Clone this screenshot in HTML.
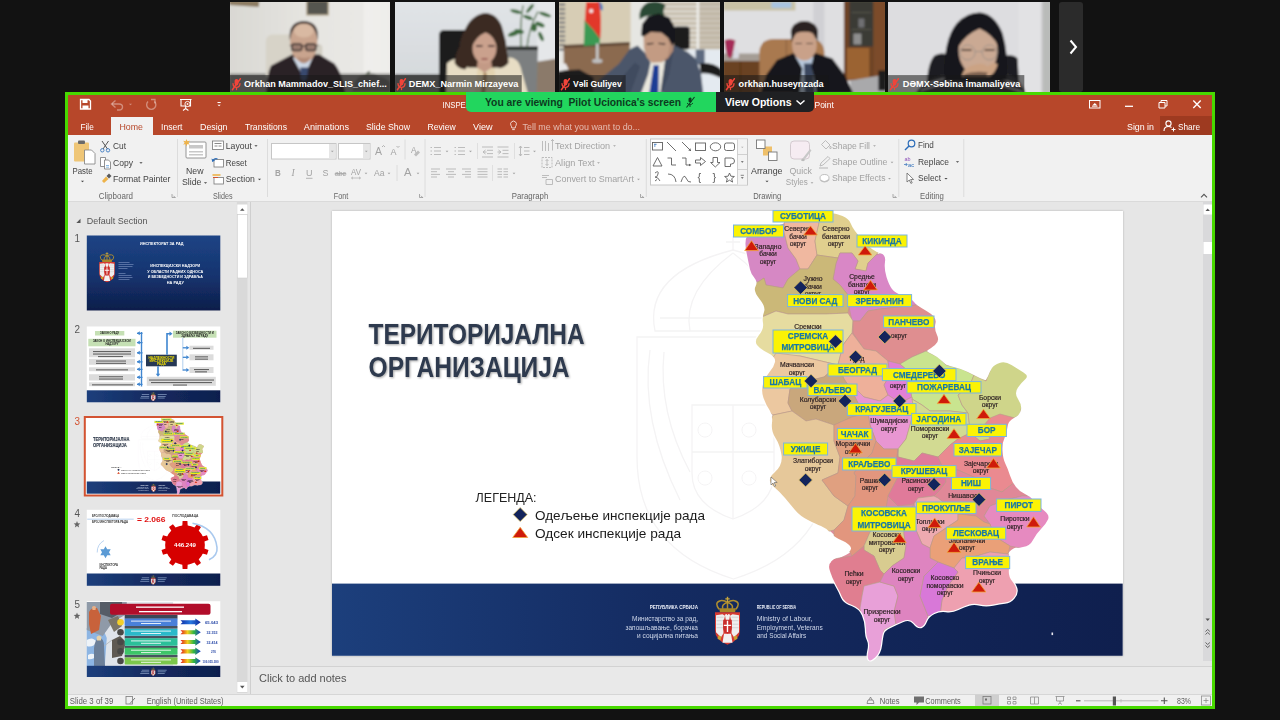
<!DOCTYPE html>
<html lang="en"><head><meta charset="utf-8"><title>Zoom Meeting - screen share</title>
<style>
html,body{margin:0;padding:0;background:#121212;}
body{width:1280px;height:720px;overflow:hidden;position:relative;font-family:"Liberation Sans",sans-serif;}
.abs{position:absolute;}
.tile{position:absolute;top:1.5px;height:90px;overflow:hidden;background:#ddd;}
.tile svg{position:absolute;left:0;top:0;}
.namebar{position:absolute;left:0;bottom:0;height:17px;background:rgba(30,30,30,.62);}
.nav{position:absolute;left:1058.5px;top:1.5px;width:24.5px;height:90px;background:#2b2b2b;border-radius:3px;}
#share{position:absolute;left:65px;top:92px;width:1144px;height:611px;border:3px solid #47d800;background:#e6e6e6;overflow:hidden;}
#share>div{position:absolute;}
#titlebar{left:0;top:0;width:1144px;height:40px;background:#b7472a;}
#ribbon{left:0;top:40px;width:1144px;height:66px;background:#f1f1f1;border-bottom:1px solid #dadada;}
#hometab{left:43px;top:22px;width:41.5px;height:18px;background:#f1f1f1;}
#sharebtn{left:1092px;top:21px;width:52px;height:19px;background:#9e3a20;}
#thumbs{left:0;top:107px;width:182px;height:492px;background:#e6e6e6;border-right:1px solid #cfcfcf;}
#slide{left:264px;top:115.5px;width:790.7px;height:445.3px;background:#fff;box-shadow:0 0 2px rgba(0,0,0,.25);}
#notes{left:183px;top:571px;width:961px;height:28px;background:#e9e9e9;border-top:1px solid #d2d2d2;}
#status{left:0;top:599px;width:1144px;height:12px;background:#f0f0f0;border-top:1px solid #d6d6d6;}
#ov{position:absolute;left:68px;top:95px;filter:blur(.4px);}
#banner{position:absolute;left:466px;top:92px;width:250px;height:20px;background:#22d65e;border-radius:0 0 0 5px;}
#viewopt{position:absolute;left:716px;top:92px;width:98px;height:20px;background:#1f2023;border-radius:0 0 5px 0;}
text{font-family:"Liberation Sans",sans-serif;}
</style></head><body>

<div class="tile" style="left:229.7px;width:160.4px"><svg width="160.4" height="90" viewBox="229.7 1.5 160.4 90"><defs><filter id="vb0" x="-5%" y="-5%" width="110%" height="110%"><feGaussianBlur stdDeviation="0.9"/></filter></defs><g filter="url(#vb0)"><linearGradient id="w1" x1="0" x2="1"><stop offset="0" stop-color="#d9d8d3"/><stop offset=".5" stop-color="#e6e5e1"/><stop offset=".82" stop-color="#e9e8e5"/><stop offset=".84" stop-color="#f0efec"/><stop offset="1" stop-color="#eeedea"/></linearGradient><rect x="229.0" y="0.0" width="162.0" height="93.0" fill="url(#w1)" /><rect x="229.0" y="73.0" width="162.0" height="20.0" fill="#8c8b88" /><rect x="306.5" y="0.0" width="21.5" height="14.5" fill="#54544f" stroke="#b9a98a" stroke-width="1.2" /><path d="M229 0h30l-.5 6.500l-29.500-2z" fill="#8d7c62"/><path d="M352 91q3-16 12-17q10-3 14 2q8 1 12 6v9z" fill="#6c6c68"/><path d="M364 76q3-6 6-5q-1 4-6 5" fill="#566050"/><rect x="265.500" y="34" width="30" height="46" rx="7" fill="#d7d3c8"/><rect x="312" y="44" width="10" height="14" rx="3" fill="#d2cec3"/><path d="M266 93q1-22 5-28l21-11h27l15 9q5 6 8 16l3 14z" fill="#2b2126"/><path d="M292.500 57l11 20l9-20z" fill="#cdd8e6"/><path d="M300 67h8l-1.500 11l-3 3l-3-3z" fill="#38486e"/><ellipse cx="303.500" cy="42" rx="13.600" ry="20" fill="#c9a48e"/><path d="M289.500 40q-2-19 14-19.500q16 .5 14 19.500q-1.500-9-4.500-12q-9-4-19 0q-3 3-4.500 12z" fill="#3a2c28"/><ellipse cx="303.500" cy="30" rx="10" ry="7" fill="#d9b9a2"/><g fill="rgba(70,55,55,.35)" stroke="#2b2527" stroke-width="1.400"><rect x="291.500" y="43.500" width="10" height="6.500" rx="2"/><rect x="305.500" y="43.500" width="10" height="6.500" rx="2"/></g><path d="M301.500 45.500h4M289.500 45h2M315.500 45h2.500" stroke="#2b2527" stroke-width="1.200"/><path d="M297 56q6.500 3 13 0q-2 7-6.500 7t-6.500-7z" fill="#a8806e" opacity=".7"/></g><rect x="229.7" y="74.6" width="160.4" height="17.0" fill="rgba(24,24,24,.55)" /><g transform="translate(230.9 77.6)" stroke="#f0453a" fill="none" stroke-width="1.300" stroke-linecap="round"><rect x="3.400" y="0.800" width="3.800" height="6.500" rx="1.900" fill="#f0453a" stroke="none"/><path d="M1.800 5.500q.3 3.800 3.500 3.800q3.200 0 3.500-3.800M5.300 9.300v2.200"/><path d="M9.200 0.600l-8 11" stroke-width="1.500"/></g><text x="243.8" y="86.4" font-size="9.8" fill="#fff" textLength="142.6" lengthAdjust="spacingAndGlyphs" font-weight="bold" >Orkhan Mammadov_SLIS_chief...</text></svg></div>
<div class="tile" style="left:395.0px;width:160.4px"><svg width="160.4" height="90" viewBox="395.0 1.5 160.4 90"><defs><filter id="vb1" x="-5%" y="-5%" width="110%" height="110%"><feGaussianBlur stdDeviation="0.9"/></filter></defs><g filter="url(#vb1)"><linearGradient id="w2" x1="0" x2="0" y1="0" y2="1"><stop offset="0" stop-color="#e1e4e7"/><stop offset="1" stop-color="#d3d7da"/></linearGradient><rect x="394.0" y="0.0" width="163.0" height="93.0" fill="url(#w2)" /><rect x="394.0" y="73.5" width="60.0" height="20.0" fill="#7a7c7d" /><rect x="537.0" y="0.0" width="20.0" height="60.0" fill="#e5e7e9" /><path d="M533 62l24-4v35h-24z" fill="#8b7a6a"/><path d="M507 46h31l-1.500 47h-27z" fill="#7c7f80"/><path d="M507 46h31v3.500h-31z" fill="#2c2c2a"/><g stroke="#4d6a46" stroke-width="1.300" fill="none"><path d="M521 47q-1-25 2-42"/><path d="M527 47q2-20 11-36"/></g><g fill="#3d6a3c"><ellipse cx="516" cy="11" rx="6" ry="1.800" transform="rotate(15 516 11)"/><ellipse cx="545" cy="14" rx="6.500" ry="1.800" transform="rotate(18 545 14)"/><ellipse cx="530" cy="8" rx="5.500" ry="1.700" transform="rotate(-50 530 8)"/><ellipse cx="540" cy="24" rx="5" ry="2.200" transform="rotate(25 540 24)"/><ellipse cx="514" cy="33" rx="6.500" ry="2.300" transform="rotate(-20 514 33)"/><ellipse cx="534" cy="27" rx="3" ry="4" /><ellipse cx="519" cy="31" rx="5" ry="2.200" transform="rotate(10 519 31)"/><ellipse cx="528" cy="17" rx="5" ry="1.800" transform="rotate(20 528 17)"/><ellipse cx="541" cy="36" rx="2" ry="5" transform="rotate(-25 541 36)"/></g><rect x="439" y="29.500" width="30" height="70" rx="5" fill="#1b1b1d"/><path d="M446 93l1-30q6-6 12-4l14 4l11 8l14-10q10-6 16-3q6 3 8 14l6 21z" fill="#e7ddc4"/><path d="M478 64l7 9l9-9l3 29h-22z" fill="#e3d3b0"/><path d="M484 70l3 4l-2 19h-4z" fill="#a88660"/><path d="M465 69q-8-1-10.500-7q1-9 5-16q1-10 5.500-17q4-9 10.500-13q5-3.500 10.500-3.500q6 .5 10.500 4.700q5 5 6.600 13.200q3 9 4 20q1.500 7 1.400 12q-4 5-9.300 5.300l-6-12h-16z" fill="#3a2a22"/><rect x="468" y="48" width="34" height="19" fill="#3a2a22"/><path d="M478 58h13l1 9l-7.500 5l-7.500-5z" fill="#c39a86"/><ellipse cx="484.500" cy="47.500" rx="12" ry="15.500" fill="#caa18d"/><path d="M471.500 47q0-14 9-16.500l5-1l-1 3q-8 3-13 14.500zM497.500 47q0-13-7-16l-5-1.500l1.500 3q6 2 10.500 14.500z" fill="#3a2a22"/><path d="M476 45.500h6.500M488 45.500h6.500" stroke="#35221f" stroke-width="1.500"/><path d="M481.500 58.500h6" stroke="#8e4a48" stroke-width="1.500"/></g><rect x="395.0" y="74.6" width="126.7" height="17.0" fill="rgba(24,24,24,.55)" /><g transform="translate(396.2 77.6)" stroke="#f0453a" fill="none" stroke-width="1.300" stroke-linecap="round"><rect x="3.400" y="0.800" width="3.800" height="6.500" rx="1.900" fill="#f0453a" stroke="none"/><path d="M1.800 5.500q.3 3.800 3.500 3.800q3.200 0 3.500-3.800M5.300 9.300v2.200"/><path d="M9.200 0.600l-8 11" stroke-width="1.500"/></g><text x="408.8" y="86.4" font-size="9.8" fill="#fff" textLength="109.6" lengthAdjust="spacingAndGlyphs" font-weight="bold" >DEMX_Narmin Mirzayeva</text></svg></div>
<div class="tile" style="left:559.3px;width:160.7px"><svg width="160.7" height="90" viewBox="559.3 1.5 160.7 90"><defs><filter id="vb2" x="-5%" y="-5%" width="110%" height="110%"><feGaussianBlur stdDeviation="0.9"/></filter></defs><g filter="url(#vb2)"><rect x="558.0" y="0.0" width="164.0" height="93.0" fill="#e6e6e2" /><rect x="558.0" y="0.0" width="73.0" height="47.0" fill="#d7cdb5" /><g fill="#8e8e90"><rect x="559.0" y="3.0" width="6.5" height="2.2" fill="#77787c" /><rect x="559.0" y="7.5" width="6.5" height="2.2" fill="#77787c" /><rect x="559.0" y="12.0" width="6.5" height="2.2" fill="#77787c" /><rect x="559.0" y="16.5" width="6.5" height="2.2" fill="#77787c" /><rect x="559.0" y="21.0" width="6.5" height="2.2" fill="#77787c" /><rect x="559.0" y="25.5" width="6.5" height="2.2" fill="#77787c" /><rect x="559.0" y="30.0" width="6.5" height="2.2" fill="#77787c" /><rect x="559.0" y="34.5" width="6.5" height="2.2" fill="#77787c" /><rect x="559.0" y="39.0" width="6.5" height="2.2" fill="#77787c" /><rect x="559.0" y="43.5" width="6.5" height="2.2" fill="#77787c" /><rect x="559.0" y="48.0" width="6.5" height="2.2" fill="#77787c" /></g><path d="M564 46l66-3v50h-66z" fill="#8b6a4f"/><path d="M564 44.500l66-3v3l-66 3z" fill="#5e4634"/><rect x="661.0" y="0.0" width="61.0" height="49.0" fill="#ddd9d0" /><rect x="661.0" y="2.5" width="61.0" height="2.3" fill="#c2b8a6" /><rect x="661.0" y="7.3" width="61.0" height="2.3" fill="#c2b8a6" /><rect x="661.0" y="12.1" width="61.0" height="2.3" fill="#c2b8a6" /><rect x="661.0" y="16.9" width="61.0" height="2.3" fill="#c2b8a6" /><rect x="661.0" y="21.7" width="61.0" height="2.3" fill="#c2b8a6" /><rect x="661.0" y="26.5" width="61.0" height="2.3" fill="#c2b8a6" /><rect x="661.0" y="31.3" width="61.0" height="2.3" fill="#c2b8a6" /><rect x="661.0" y="36.1" width="61.0" height="2.3" fill="#c2b8a6" /><rect x="661.0" y="40.9" width="61.0" height="2.3" fill="#c2b8a6" /><rect x="661.0" y="45.7" width="61.0" height="2.3" fill="#c2b8a6" /><rect x="697.0" y="0.0" width="2.5" height="49.0" fill="#eeeeea" /><rect x="699.5" y="0.0" width="23.0" height="49.0" fill="#b9ae9b" opacity=".45"/><rect x="688.0" y="49.0" width="34.0" height="44.0" fill="#e4eaf0" /><rect x="696.0" y="49.0" width="9.0" height="15.0" fill="#5d6b80" /><path d="M598 0q6 3 5 10l-6-2z" fill="#3d7cc0"/><path d="M586.500 1.500h13q3 18 1 37l-6.500-3l-9-14z" fill="#e2372a"/><path d="M585 20l8.500 9l7 9.500l-1 6l-15.500 1z" fill="#3b9a52"/><circle cx="591.500" cy="10.500" r="2" fill="#f4eeee"/><rect x="596.3" y="43.0" width="2.6" height="18.0" fill="#c9c9c9" /><ellipse cx="597.600" cy="60.500" rx="5.300" ry="2.200" fill="#bdbdbd"/><path d="M640 19q-2-12 8-17q12-3 18 3q-4 6-1 10l-8 1q-8-3-17 3z" fill="#2c4a34"/><rect x="674" y="26" width="16" height="23" rx="3" fill="#1c1c1f"/><path d="M700 63q12-2 22 6v9q-12-6-21-5z" fill="#1b1b1e"/><path d="M591.6 95.0L599.6 79.2L619.3 63.3L629.9 48.8L637.8 44.9L645.7 52.8L651.0 62.0L656.3 63.3L665.5 59.4L670.8 50.2L674.8 44.9L688.0 51.5L695.9 58.1L701.2 72.6L703.8 95.0z" fill="#4c576b"/><path d="M612.8 95.0L624.6 73.9L635.2 62.0L640.5 66.0L629.9 95.0z" fill="#414b5e"/><path d="M640.5 95.0L648.4 73.9L651.0 61.4L665.5 59.4L662.9 95.0z" fill="#e9e7dd"/><path d="M653.9 64.7L659.2 64.7L658.7 95.0L649.2 95.0z" fill="#1c3e95"/><path d="M665.5 59.4L670.8 50.2L674.8 45.5L669.5 73.9L661.6 95.0L660.3 95.0z" fill="#414b5e"/><path d="M666.9 38.3L674.1 39.6L673.5 50.2L668.2 58.1L661.6 62.0z" fill="#b38c76"/><path d="M643.8 34.3L651.0 31.0L661.6 31.7L668.2 37.0L670.2 44.9L668.2 55.4L661.6 61.8L652.3 62.3L647.1 56.8L644.2 47.5z" fill="#c39b83"/><path d="M641.5 35.0L642.4 23.8L648.4 15.8L658.9 12.9L669.5 16.9L675.0 26.4L675.8 38.3L672.8 45.5L668.4 37.6L661.6 32.1L651.0 31.4L644.2 35.9z" fill="#19191b"/><path d="M647.1 43.6L653.7 42.9" stroke="#2a2220" stroke-width="1.300" fill="none"/><path d="M658.9 42.9L665.5 43.6" stroke="#2a2220" stroke-width="1.300" fill="none"/><path d="M558 70l22-1l14 8v16h-36z" fill="#1d1d1e"/><path d="M558 63l8 0l3 6l-11 2z" fill="#e8e8e8"/></g><rect x="559.3" y="74.6" width="66.7" height="17.0" fill="rgba(24,24,24,.55)" /><g transform="translate(560.5 77.6)" stroke="#f0453a" fill="none" stroke-width="1.300" stroke-linecap="round"><rect x="3.400" y="0.800" width="3.800" height="6.500" rx="1.900" fill="#f0453a" stroke="none"/><path d="M1.800 5.500q.3 3.800 3.500 3.800q3.200 0 3.500-3.800M5.300 9.300v2.200"/><path d="M9.200 0.600l-8 11" stroke-width="1.500"/></g><text x="573.2" y="86.4" font-size="9.8" fill="#fff" textLength="48.8" lengthAdjust="spacingAndGlyphs" font-weight="bold" >Vəli Guliyev</text></svg></div>
<div class="tile" style="left:723.6px;width:161.1px"><svg width="161.1" height="90" viewBox="723.6 1.5 161.1 90"><defs><filter id="vb3" x="-5%" y="-5%" width="110%" height="110%"><feGaussianBlur stdDeviation="0.9"/></filter></defs><g filter="url(#vb3)"><rect x="722.0" y="0.0" width="164.0" height="93.0" fill="#dfdfe1" /><rect x="813.0" y="0.0" width="11.0" height="93.0" fill="#d0d0d4" /><rect x="723.0" y="0.0" width="72.0" height="10.0" fill="#c9c2a5" /><rect x="771.0" y="1.5" width="20.0" height="6.0" fill="#a9c4e0" /><rect x="843.5" y="0.0" width="43.0" height="80.0" fill="#6d4326" /><rect x="849.0" y="0.0" width="24.0" height="46.0" fill="#3b3a36" /><rect x="846.5" y="47.5" width="22.5" height="31.5" fill="#9b6333" /><rect x="873.0" y="0.0" width="13.0" height="78.0" fill="#7b4b2b" /><path d="M851 12h20M851 29h20" stroke="#57534b" stroke-width="1"/><rect x="853" y="33" width="8" height="11" fill="#8e8e8e"/><rect x="858" y="18" width="6" height="9" fill="#6f7072"/><path d="M850 80l36-6v19h-36z" fill="#a9a9ab"/><path d="M878 70h8v20h-8z" fill="#1e1e1e"/><rect x="722.0" y="53.0" width="38.0" height="8.0" fill="#a59d95" /><rect x="722.0" y="60.5" width="38.0" height="33.0" fill="#6a4224" /><path d="M740 61v32" stroke="#4f2f18" stroke-width="1"/><path d="M724 40q5-3 11 0l-2 10q-1 6-3.500 8q-3-2-4-8z" fill="#a62a58"/><path d="M735 46q5 4 3 12h-6z" fill="#d9d9e2"/><path d="M759 93v-42q1-12 14-12.500h38q12 1 13 13v41z" fill="#a9794f"/><path d="M786 39v54" stroke="#8d6240" stroke-width="1.200"/><path d="M760 93l6-19l10.500-14.500l16-6.700h23.500l16 5.200l12 16l9 19z" fill="#17171a"/><path d="M795 56l18 0l3 37h-17z" fill="#b9c9dd"/><path d="M803.500 63h8l3 30h-10z" fill="#3a465f"/><path d="M795 56l7 12l-3 25h-8zM813 56l-2 10l6 27h6z" fill="#17171a"/><ellipse cx="804" cy="32" rx="13.600" ry="11.500" fill="#2a2320"/><ellipse cx="804" cy="44.500" rx="12.300" ry="15.500" fill="#c9a189"/><path d="M791 42q-1-9 3-13q10-4 20 0q4 4 3.500 13q-2-7-5-9.500q-8-2.500-16.500 0q-3 3-5 9.500z" fill="#2a2320"/><path d="M795 43h6.500M806 43h6.500" stroke="#3a2a26" stroke-width="1.200"/></g><rect x="723.6" y="74.6" width="104.5" height="17.0" fill="rgba(24,24,24,.55)" /><g transform="translate(724.8 77.6)" stroke="#f0453a" fill="none" stroke-width="1.300" stroke-linecap="round"><rect x="3.400" y="0.800" width="3.800" height="6.500" rx="1.900" fill="#f0453a" stroke="none"/><path d="M1.800 5.500q.3 3.800 3.500 3.800q3.200 0 3.500-3.800M5.300 9.300v2.200"/><path d="M9.200 0.600l-8 11" stroke-width="1.500"/></g><text x="738.2" y="86.4" font-size="9.8" fill="#fff" textLength="85.1" lengthAdjust="spacingAndGlyphs" font-weight="bold" >orkhan.huseynzada</text></svg></div>
<div class="tile" style="left:888.4px;width:161.8px"><svg width="161.8" height="90" viewBox="888.4 1.5 161.8 90"><defs><filter id="vb4" x="-5%" y="-5%" width="110%" height="110%"><feGaussianBlur stdDeviation="0.9"/></filter></defs><g filter="url(#vb4)"><rect x="887.0" y="0.0" width="165.0" height="93.0" fill="#dddde0" /><rect x="1019.0" y="0.0" width="24.0" height="93.0" fill="#e2e2e4" /><rect x="1043.0" y="0.0" width="9.0" height="93.0" fill="#b9bbb9" /><rect x="1041.5" y="0.0" width="1.5" height="93.0" fill="#c9c9cb" /><path d="M927 93q0-30 8-38q8-4 14 0v38zM1003 56q10-3 15 2l2 35h-18z" fill="#1d1d20"/><path d="M916 93q8-14 30-19h62q14 4 18 19z" fill="#35353a"/><g stroke="#d8d8da" stroke-width="1.300"><path d="M925 84l24-7M921 90l30-9M1000 78l22 8M1004 85l20 7"/></g><path d="M945 80q-2-40 12-57q10-11 23-11q15 1 23 21q6 20 4 47z" fill="#17171b"/><ellipse cx="978.500" cy="50" rx="19.500" ry="25" fill="#caa993"/><path d="M959 46q2-22 18-26q4-2 4 0q16 4 18 26q-6-12-19-18q-14 6-21 18z" fill="#17171b"/><g fill="none" stroke="#9a9088" stroke-width="0.900"><circle cx="968" cy="52" r="7.500"/><circle cx="990" cy="52" r="7.500"/><path d="M975.500 51h7"/></g><path d="M962 49.500h10M985 49.500h10" stroke="#3a2c28" stroke-width="1.400"/><path d="M962 76q2-10 14-12q8-2 12 2q8-6 10-2q-2 8-8 12h-22z" fill="#cba384"/><path d="M964 74q10-4 24-2l-2 6h-20z" fill="#3a2c24" opacity=".55"/></g><rect x="888.4" y="74.6" width="136.3" height="17.0" fill="rgba(24,24,24,.55)" /><g transform="translate(889.6 77.6)" stroke="#f0453a" fill="none" stroke-width="1.300" stroke-linecap="round"><rect x="3.400" y="0.800" width="3.800" height="6.500" rx="1.900" fill="#f0453a" stroke="none"/><path d="M1.800 5.500q.3 3.800 3.500 3.800q3.200 0 3.500-3.800M5.300 9.300v2.200"/><path d="M9.200 0.600l-8 11" stroke-width="1.500"/></g><text x="903.2" y="86.4" font-size="9.8" fill="#fff" textLength="117.5" lengthAdjust="spacingAndGlyphs" font-weight="bold" >DƏMX-Səbina İmamaliyeva</text></svg></div>
<div class="nav"><svg width="24.500" height="90" viewBox="0 0 24.500 90"><path d="M11.500 38.500l5.500 6.500l-5.500 6.500" fill="none" stroke="#fff" stroke-width="2"/></svg></div>
<div id="share">
<div id="titlebar"></div><div id="hometab"></div><div id="sharebtn"></div>
<div id="ribbon"></div>
<div id="thumbs"></div>
<div id="slide"></div>
<div id="notes"></div>
<div id="status"></div>
</div>

<svg id="ov" width="1144" height="611" viewBox="68 95 1144 611">
<g id="titlebar-items">
<path d="M80.500 99.500h8.500l1.500 1.500v8h-10z" fill="none" stroke="#fff" stroke-width="1.300"/><rect x="82.500" y="100" width="5" height="3" fill="#fff"/><rect x="82.500" y="105.500" width="6" height="3.500" fill="#fff"/>
<path d="M112 104h7q3.500 0 3.500 3t-3.500 3h-2" fill="none" stroke="rgba(255,255,255,.38)" stroke-width="1.400"/><path d="M115.500 100.500l-4 3.500l4 3.500" fill="none" stroke="rgba(255,255,255,.38)" stroke-width="1.400"/>
<path d="M128.9 103.7h3.2l-1.6 1.6z" fill="rgba(255,255,255,.38)"/>
<path d="M154.500 101.500a4.600 4.600 0 1 1-6.500 0" fill="none" stroke="rgba(255,255,255,.38)" stroke-width="1.400"/><path d="M151 99.500h4v4" fill="none" stroke="rgba(255,255,255,.38)" stroke-width="1.300"/>
<path d="M180 99.500h11.500M181 99.500v6.500h9.500v-6.500M185.700 106v2.500M183 110.500l2.700-2l2.700 2" fill="none" stroke="#fff" stroke-width="1.100"/><circle cx="187.500" cy="104" r="2.600" fill="#b7472a" stroke="#fff" stroke-width="0.900"/><path d="M186.800 102.800l2 1.200l-2 1.200z" fill="#fff"/>
<path d="M217.500 102.500h3.200" stroke="#fff" stroke-width="1"/><path d="M217.5 104.7h3.2l-1.6 1.6z" fill="#ffffff"/>
<text y="108.100" font-size="9.600" fill="#fff"><tspan x="442.500" textLength="371.500" lengthAdjust="spacingAndGlyphs">INSPEKCIJSKI NADZORI U OBLASTI RADNIH ODNOSA I BEZBEDNOSTI I ZDRAVLJA NA RADU - Power</tspan><tspan x="814.500" textLength="19.300" lengthAdjust="spacingAndGlyphs">Point</tspan></text>
<text x="80.5" y="129.5" font-size="9.8" fill="#ffffff" textLength="13.3" lengthAdjust="spacingAndGlyphs" >File</text>
<text x="119.5" y="129.5" font-size="9.8" fill="#b7472a" textLength="23.5" lengthAdjust="spacingAndGlyphs" >Home</text>
<text x="161.0" y="129.5" font-size="9.8" fill="#ffffff" textLength="21.5" lengthAdjust="spacingAndGlyphs" >Insert</text>
<text x="200.0" y="129.5" font-size="9.8" fill="#ffffff" textLength="27.5" lengthAdjust="spacingAndGlyphs" >Design</text>
<text x="245.0" y="129.5" font-size="9.8" fill="#ffffff" textLength="42.0" lengthAdjust="spacingAndGlyphs" >Transitions</text>
<text x="303.8" y="129.5" font-size="9.8" fill="#ffffff" textLength="45.2" lengthAdjust="spacingAndGlyphs" >Animations</text>
<text x="366.0" y="129.5" font-size="9.8" fill="#ffffff" textLength="44.0" lengthAdjust="spacingAndGlyphs" >Slide Show</text>
<text x="427.5" y="129.5" font-size="9.8" fill="#ffffff" textLength="28.3" lengthAdjust="spacingAndGlyphs" >Review</text>
<text x="473.0" y="129.5" font-size="9.8" fill="#ffffff" textLength="19.5" lengthAdjust="spacingAndGlyphs" >View</text>
<path d="M511 125.500a2.900 2.900 0 1 1 5 0q-.8 1.200-.8 2.500h-3.400q0-1.300-.8-2.500zM512.200 129.600h2.600" fill="none" stroke="rgba(255,255,255,.85)" stroke-width="0.900"/>
<text x="522.5" y="129.5" font-size="9.8" fill="rgba(255,255,255,.62)" textLength="117.5" lengthAdjust="spacingAndGlyphs" >Tell me what you want to do...</text>
<text x="1127.0" y="129.5" font-size="9.8" fill="#ffffff" textLength="27.0" lengthAdjust="spacingAndGlyphs" >Sign in</text>
<circle cx="1168.500" cy="123.500" r="2.600" fill="none" stroke="#fff" stroke-width="1.100"/><path d="M1164 131q0-4.500 4.500-4.500q2 0 3 1" fill="none" stroke="#fff" stroke-width="1.100"/><path d="M1171.500 129.500h4M1173.500 127.500v4" stroke="#fff" stroke-width="1"/>
<text x="1178.0" y="129.5" font-size="9.8" fill="#ffffff" textLength="22.0" lengthAdjust="spacingAndGlyphs" >Share</text>
<rect x="1089.500" y="100.500" width="10.500" height="7.500" fill="none" stroke="#fff" stroke-width="1"/><path d="M1092.200 105.500l2.600-2.600l2.600 2.600z" fill="#fff"/><path d="M1092 106.300h5.500" stroke="#fff" stroke-width="0.800"/>
<path d="M1125 106.300h8" stroke="#fff" stroke-width="1.300"/>
<path d="M1159 102.500h6v5.500h-6zM1161 102.500v-2h6v5.500h-2" fill="none" stroke="#fff" stroke-width="1"/>
<path d="M1193.300 100.500l7.400 7.400M1200.700 100.500l-7.400 7.400" stroke="#fff" stroke-width="1.400"/>
</g>
<g id="ribbon-items">
<path d="M177.5 139v58" stroke="#dcdcdc" stroke-width="1"/>
<path d="M267.5 139v58" stroke="#dcdcdc" stroke-width="1"/>
<path d="M425.0 139v58" stroke="#dcdcdc" stroke-width="1"/>
<path d="M646.3 139v58" stroke="#dcdcdc" stroke-width="1"/>
<path d="M898.8 139v58" stroke="#dcdcdc" stroke-width="1"/>
<path d="M963.8 139v58" stroke="#dcdcdc" stroke-width="1"/>
<text x="98.8" y="198.9" font-size="8.6" fill="#666" textLength="34.2" lengthAdjust="spacingAndGlyphs" >Clipboard</text>
<text x="213.0" y="198.9" font-size="8.6" fill="#666" textLength="19.5" lengthAdjust="spacingAndGlyphs" >Slides</text>
<text x="333.8" y="198.9" font-size="8.6" fill="#666" textLength="14.5" lengthAdjust="spacingAndGlyphs" >Font</text>
<text x="511.8" y="198.9" font-size="8.6" fill="#666" textLength="36.5" lengthAdjust="spacingAndGlyphs" >Paragraph</text>
<text x="753.3" y="198.9" font-size="8.6" fill="#666" textLength="28.0" lengthAdjust="spacingAndGlyphs" >Drawing</text>
<text x="920.0" y="198.9" font-size="8.6" fill="#666" textLength="23.8" lengthAdjust="spacingAndGlyphs" >Editing</text>
<path d="M172.0 194v3.500h3.500M173.5 195.800l1.700 1.700" fill="none" stroke="#8a8a8a" stroke-width="0.700"/>
<path d="M419.5 194v3.500h3.500M421.0 195.800l1.700 1.700" fill="none" stroke="#8a8a8a" stroke-width="0.700"/>
<path d="M640.5 194v3.500h3.500M642.0 195.800l1.700 1.700" fill="none" stroke="#8a8a8a" stroke-width="0.700"/>
<path d="M893.0 194v3.500h3.500M894.5 195.800l1.700 1.700" fill="none" stroke="#8a8a8a" stroke-width="0.700"/>
<path d="M1201 197.300l3-3l3 3" fill="none" stroke="#555" stroke-width="1.100"/>
<g id="g-clipboard">
<rect x="74" y="142.500" width="15" height="19" rx="1" fill="#efc677"/><rect x="78" y="140.500" width="7" height="3.500" rx="1" fill="#6a6a6a"/><path d="M84.500 150h7l3.500 3.500v10.500h-10.500z" fill="#fff" stroke="#7d7d7d" stroke-width="0.800"/>
<text x="72.5" y="173.6" font-size="9.6" fill="#444444" textLength="20.0" lengthAdjust="spacingAndGlyphs" >Paste</text>
<path d="M80.9 180.7h3.2l-1.6 1.6z" fill="#444444"/>
<path d="M102 141l5.500 8M108.500 141l-5.500 8" stroke="#555" stroke-width="1"/><circle cx="102.300" cy="150.300" r="1.700" fill="none" stroke="#3b78c0" stroke-width="0.900"/><circle cx="108" cy="150.300" r="1.700" fill="none" stroke="#3b78c0" stroke-width="0.900"/>
<text x="113.0" y="148.9" font-size="9.6" fill="#444444" textLength="13.0" lengthAdjust="spacingAndGlyphs" >Cut</text>
<path d="M100.500 157.500h5v9h-5z" fill="#fff" stroke="#777" stroke-width="0.800"/><path d="M104.500 160h4l2 2v7h-6z" fill="#fff" stroke="#777" stroke-width="0.800"/><path d="M106 165.500h3M106 167.200h3" stroke="#5c9bd5" stroke-width="0.700"/>
<text x="113.0" y="165.7" font-size="9.6" fill="#444444" textLength="20.0" lengthAdjust="spacingAndGlyphs" >Copy</text>
<path d="M139.4 162.2h3.2l-1.6 1.6z" fill="#444444"/>
<path d="M102 181l4-4.500l2.500 2.500l-4.500 4z" fill="#eeb34a"/><path d="M106.500 176l2.500-2.500l2.500 2.500l-2.500 2.500z" fill="#5a5a5a"/>
<text x="113.0" y="182.3" font-size="9.6" fill="#444444" textLength="57.5" lengthAdjust="spacingAndGlyphs" >Format Painter</text>
</g>
<g id="g-slides">
<rect x="186" y="142" width="20" height="16" rx="1" fill="#fff" stroke="#8a8a8a" stroke-width="0.900"/><rect x="189" y="145" width="14" height="3.500" fill="#c8c8c8"/><rect x="189" y="151" width="14" height="1.500" fill="#c8c8c8"/><rect x="189" y="154" width="14" height="1.500" fill="#c8c8c8"/>
<path d="M186.500 139l.9 2.300l2.400-.6l-1.400 2l1.400 2l-2.400-.6l-.9 2.300l-.9-2.300l-2.400.6l1.400-2l-1.400-2l2.400.6z" fill="#eeb34a"/>
<text x="186.0" y="173.6" font-size="9.6" fill="#444444" textLength="17.5" lengthAdjust="spacingAndGlyphs" >New</text>
<text x="182.0" y="185.4" font-size="9.6" fill="#444444" textLength="19.5" lengthAdjust="spacingAndGlyphs" >Slide</text>
<path d="M203.9 182.2h3.2l-1.6 1.6z" fill="#444444"/>
<rect x="212.500" y="141" width="11" height="8.500" fill="#fff" stroke="#777" stroke-width="0.800"/><path d="M214.500 143.500h7M214.500 146h3M218.500 146h3" stroke="#8a8a8a" stroke-width="1"/>
<text x="225.8" y="148.9" font-size="9.6" fill="#444444" textLength="26.0" lengthAdjust="spacingAndGlyphs" >Layout</text>
<path d="M254.4 145.2h3.2l-1.6 1.6z" fill="#444444"/>
<rect x="214" y="159.500" width="9.500" height="7.500" fill="#fff" stroke="#777" stroke-width="0.800"/><path d="M212.500 161.500a3.500 3.500 0 0 1 5-2.500" fill="none" stroke="#2b6cb8" stroke-width="1.200"/><path d="M211.500 158.500l.7 3.300l3-1z" fill="#2b6cb8"/>
<text x="225.8" y="165.7" font-size="9.6" fill="#444444" textLength="21.0" lengthAdjust="spacingAndGlyphs" >Reset</text>
<rect x="214" y="177.500" width="9.500" height="6.500" fill="#fff" stroke="#777" stroke-width="0.800"/><path d="M212.500 175h8" stroke="#eeb34a" stroke-width="1.600"/><path d="M213 177.500h5" stroke="#d35230" stroke-width="1"/>
<text x="225.8" y="182.3" font-size="9.6" fill="#444444" textLength="29.0" lengthAdjust="spacingAndGlyphs" >Section</text>
<path d="M257.9 178.7h3.2l-1.6 1.6z" fill="#444444"/>
</g>
<g id="g-font">
<rect x="271.5" y="143.5" width="64.5" height="15.5" fill="#fff" stroke="#c6c6c6" stroke-width="1" />
<rect x="329.0" y="144.0" width="6.5" height="14.5" fill="#e6e6e6" />
<path d="M330.9 150.8h2.8l-1.4 1.4z" fill="#a3a3a3"/>
<rect x="338.5" y="143.5" width="31.5" height="15.5" fill="#fff" stroke="#c6c6c6" stroke-width="1" />
<rect x="363.0" y="144.0" width="6.5" height="14.5" fill="#e6e6e6" />
<path d="M364.9 150.8h2.8l-1.4 1.4z" fill="#a3a3a3"/>
<text x="375.0" y="154.9" font-size="10.5" fill="#a3a3a3" textLength="7.0" lengthAdjust="spacingAndGlyphs" >A</text>
<path d="M382 147l1.500-1.500l1.500 1.500" fill="none" stroke="#a3a3a3" stroke-width="0.800"/>
<text x="390.5" y="154.9" font-size="9.0" fill="#a3a3a3" textLength="6.0" lengthAdjust="spacingAndGlyphs" >A</text>
<path d="M396.500 146l1.500 1.500l1.500-1.500" fill="none" stroke="#a3a3a3" stroke-width="0.800"/>
<path d="M405 139.500v20" stroke="#dcdcdc" stroke-width="1"/>
<text x="411.0" y="152.7" font-size="8.5" fill="#a3a3a3" textLength="5.5" lengthAdjust="spacingAndGlyphs" >A</text>
<path d="M414 154.500l4-4l2 2l-4 4z" fill="#bdbdbd"/>
<text x="275.0" y="176.4" font-size="9.8" fill="#a3a3a3" textLength="5.8" lengthAdjust="spacingAndGlyphs" font-weight="bold" >B</text>
<text x="291.5" y="176.4" font-size="9.8" fill="#a3a3a3" textLength="3.2" lengthAdjust="spacingAndGlyphs" font-style="italic" style="font-family:'Liberation Serif',serif">I</text>
<text x="306.0" y="176.2" font-size="9.8" fill="#a3a3a3" textLength="6.5" lengthAdjust="spacingAndGlyphs" >U</text>
<path d="M306 178.300h6.500" stroke="#a3a3a3" stroke-width="0.800"/>
<text x="322.5" y="176.4" font-size="9.8" fill="#a3a3a3" textLength="6.0" lengthAdjust="spacingAndGlyphs" >S</text>
<text x="335.0" y="176.0" font-size="8.0" fill="#a3a3a3" textLength="11.0" lengthAdjust="spacingAndGlyphs" text-decoration="line-through">abc</text>
<path d="M334.500 174h12" stroke="#a3a3a3" stroke-width="0.700"/>
<text x="351.0" y="175.3" font-size="8.8" fill="#a3a3a3" textLength="10.0" lengthAdjust="spacingAndGlyphs" >AV</text>
<path d="M351.500 178h9M351.500 178l1.500-1.200M351.500 178l1.500 1.200M360.500 178l-1.500-1.200M360.500 178l-1.500 1.200" stroke="#a3a3a3" stroke-width="0.600" fill="none"/>
<path d="M364.6 172.8h2.8l-1.4 1.4z" fill="#a3a3a3"/>
<text x="374.0" y="176.3" font-size="9.5" fill="#a3a3a3" textLength="10.5" lengthAdjust="spacingAndGlyphs" >Aa</text>
<path d="M387.6 172.8h2.8l-1.4 1.4z" fill="#a3a3a3"/>
<path d="M397 165v16" stroke="#dcdcdc" stroke-width="1"/>
<text x="404.0" y="176.1" font-size="11.0" fill="#a3a3a3" textLength="7.5" lengthAdjust="spacingAndGlyphs" >A</text>
<path d="M416.6 172.8h2.8l-1.4 1.4z" fill="#a3a3a3"/>
</g>
<g id="g-paragraph" stroke="#b5b5b5" fill="none" stroke-width="0.900">
<path d="M430.500 147.5h1.500M434 147.5h7"/>
<path d="M454.500 147.5h1.500M458 147.5h7"/>
<path d="M430.500 151.0h1.500M434 151.0h7"/>
<path d="M454.500 151.0h1.500M458 151.0h7"/>
<path d="M430.500 154.5h1.500M434 154.5h7"/>
<path d="M454.500 154.5h1.500M458 154.5h7"/>
<path d="M477.500 143v16M514.500 143v16M492.500 165v16" stroke="#dcdcdc"/>
<path d="M482.0 147h11M487.0 150.300h6M487.0 153.600h6M482.0 157h11"/>
<path d="M497.5 147h11M502.5 150.300h6M502.5 153.600h6M497.5 157h11"/>
<path d="M485.500 150l-2.500 2l2.500 2M483 152h3.500M498.500 150l2.500 2l-2.500 2M497.500 152h3.500"/>
<path d="M524 147.500h5.500M524 151h5.500M524 154.500h5.500M520.500 146v10M519 148l1.500-2l1.500 2M519 154l1.500 2l1.500-2"/>
<path d="M431 169h9M431 171.700h6M431 174.400h9M431 177h6"/>
<path d="M446 169h10M448 171.700h6M446 174.400h10M448 177h6"/>
<path d="M462 169h9M465 171.700h6M462 174.400h9M465 177h6"/>
<path d="M477.500 169h10M477.500 171.700h10M477.500 174.400h10M477.500 177h10"/>
<path d="M497.500 169h4.500M497.500 171.700h4.500M497.500 174.400h4.500M497.500 177h4.500M503.500 169h4.500M503.500 171.700h4.500M503.500 174.400h4.500M503.500 177h4.500"/>
</g>
<path d="M445.6 150.8h2.8l-1.4 1.4z" fill="#a3a3a3"/>
<path d="M469.1 150.8h2.8l-1.4 1.4z" fill="#a3a3a3"/>
<path d="M533.1 150.8h2.8l-1.4 1.4z" fill="#a3a3a3"/>
<path d="M512.6 172.8h2.8l-1.4 1.4z" fill="#a3a3a3"/>
<g id="g-paragraph2">
<path d="M542.500 141v10M545.500 141v10M548.500 143v8M551 141l1.500-1.500l1.500 1.500M552.500 139.500v11" stroke="#b0b0b0" fill="none" stroke-width="0.800"/>
<text x="555.0" y="148.9" font-size="9.6" fill="#a3a3a3" textLength="55.0" lengthAdjust="spacingAndGlyphs" >Text Direction</text>
<path d="M613.1 145.3h2.8l-1.4 1.4z" fill="#a3a3a3"/>
<rect x="542" y="157.500" width="10" height="10" fill="none" stroke="#b0b0b0" stroke-width="0.800" stroke-dasharray="2 1"/><path d="M547 159.500v6M545.500 161l1.500-1.500l1.500 1.500M545.500 164l1.500 1.500l1.500-1.500" stroke="#b0b0b0" fill="none" stroke-width="0.800"/>
<text x="555.0" y="165.7" font-size="9.6" fill="#a3a3a3" textLength="39.5" lengthAdjust="spacingAndGlyphs" >Align Text</text>
<path d="M597.1 162.3h2.8l-1.4 1.4z" fill="#a3a3a3"/>
<path d="M542 175.500h7M542 177.500h5M546 179.500h6.500v5h-6.500z" stroke="#b0b0b0" fill="none" stroke-width="0.800"/>
<text x="555.0" y="182.3" font-size="9.6" fill="#a3a3a3" textLength="79.0" lengthAdjust="spacingAndGlyphs" >Convert to SmartArt</text>
<path d="M637.1 178.8h2.8l-1.4 1.4z" fill="#a3a3a3"/>
</g>
<g id="g-drawing">
<rect x="650.5" y="139.0" width="97.0" height="46.0" fill="#fff" stroke="#c6c6c6" stroke-width="1" />
<rect x="737.5" y="139.5" width="9.5" height="45.0" fill="#f3f3f3" />
<path d="M737.500 139.500v45M737.500 154.500h9.500M737.500 169.500h9.500" stroke="#c6c6c6" stroke-width="0.800"/>
<path d="M741.0 146.8h2.6l-1.3 1.3z" fill="#b0b0b0"/>
<path d="M740.9 161.3h2.8l-1.4 1.4z" fill="#555"/>
<path d="M740.9 177.3h2.8l-1.4 1.4z" fill="#555"/>
<path d="M740.700 175.300h3.200" stroke="#555" stroke-width="0.700"/>
<rect x="652.500" y="142.500" width="10" height="7.500" stroke="#5f5f5f" fill="none" stroke-width="0.900"/><path d="M654 144.300h2.500M654 146h1.500" stroke="#2b6cb8" stroke-width="0.900"/>
<path d="M667 142l9 9" stroke="#5f5f5f" fill="none" stroke-width="0.900"/><path d="M682 142l9 9" stroke="#5f5f5f" fill="none" stroke-width="0.900"/><path d="M691 151l-2.700-.6l2.100-2.100z" fill="#5f5f5f"/>
<rect x="695.500" y="143" width="10" height="7.500" stroke="#5f5f5f" fill="none" stroke-width="0.900"/><ellipse cx="715.500" cy="146.800" rx="5.200" ry="4" stroke="#5f5f5f" fill="none" stroke-width="0.900"/><rect x="724.500" y="143" width="10" height="7.500" rx="2" stroke="#5f5f5f" fill="none" stroke-width="0.900"/>
<path d="M657.500 157.500l4.500 8.500h-9z" stroke="#5f5f5f" fill="none" stroke-width="0.900"/><path d="M667.500 158h4v7h4.500" stroke="#5f5f5f" fill="none" stroke-width="0.900"/><path d="M682 158h4v7h4" stroke="#5f5f5f" fill="none" stroke-width="0.900"/><path d="M691.500 165l-2.500-1.200v2.400z" fill="#5f5f5f"/>
<path d="M695.500 160h5v-2.500l5 4l-5 4v-2.500h-5z" stroke="#5f5f5f" fill="none" stroke-width="0.900"/><path d="M713 157.500h4.500v5h2.500l-4.700 4.500l-4.700-4.500h2.400z" stroke="#5f5f5f" fill="none" stroke-width="0.900"/><path d="M725 158h6.500q3 0 3 3t-3 3h-1v2.500h-5.500z" stroke="#5f5f5f" fill="none" stroke-width="0.900"/>
<path d="M655 173q4-3 3 1t-3 3q3 0 5 4M655 181l2-1.500" stroke="#5f5f5f" fill="none" stroke-width="0.900"/><path d="M668 174q7 0 8 8" stroke="#5f5f5f" fill="none" stroke-width="0.900"/><path d="M681 182q3-9 5-4t5 4" stroke="#5f5f5f" fill="none" stroke-width="0.900"/>
<text x="697.5" y="181.1" font-size="11.0" fill="#5f5f5f" >{</text>
<text x="712.5" y="181.1" font-size="11.0" fill="#5f5f5f" >}</text>
<path d="M729.500 173l1.400 3.200l3.500.3l-2.700 2.200l.9 3.400l-3.100-1.900l-3.100 1.900l.9-3.400l-2.700-2.200l3.500-.3z" stroke="#5f5f5f" fill="none" stroke-width="0.900"/>
<rect x="763" y="146.500" width="9" height="9" fill="#efc06a"/><rect x="756.500" y="140" width="8.500" height="8.500" fill="#fff" stroke="#777" stroke-width="0.900"/><rect x="768.500" y="152" width="8.500" height="8.500" fill="#fff" stroke="#777" stroke-width="0.900"/>
<text x="751.0" y="173.6" font-size="9.6" fill="#444444" textLength="31.5" lengthAdjust="spacingAndGlyphs" >Arrange</text>
<path d="M765.4 180.7h3.2l-1.6 1.6z" fill="#444444"/>
<rect x="790.500" y="141" width="19" height="18" rx="3.500" fill="#f6ecf2" stroke="#cfc5cb" stroke-width="0.900"/><path d="M803 158l7-9l1.500 1.500l-6.500 8.500z" fill="#c8c8c8"/><path d="M801 160.500q1-3 3-2l1 1.500q-1 2-4 .5z" fill="#bdbdbd"/>
<text x="789.5" y="173.6" font-size="9.6" fill="#a3a3a3" textLength="22.5" lengthAdjust="spacingAndGlyphs" >Quick</text>
<text x="785.8" y="185.4" font-size="9.6" fill="#a3a3a3" textLength="22.0" lengthAdjust="spacingAndGlyphs" >Styles</text>
<path d="M810.6 182.3h2.8l-1.4 1.4z" fill="#a3a3a3"/>
<path d="M821.500 144.500l4-4l4.500 4.500l-4 4zM830.500 146q1.500 2 0 3q-1.500-1 0-3" stroke="#b0b0b0" fill="none" stroke-width="0.800"/>
<text x="832.0" y="148.6" font-size="9.6" fill="#a3a3a3" textLength="38.0" lengthAdjust="spacingAndGlyphs" >Shape Fill</text>
<path d="M873.1 145.3h2.8l-1.4 1.4z" fill="#a3a3a3"/>
<path d="M820 166l1-3l7-6.500l2 2l-7 6.500z" stroke="#b0b0b0" fill="none" stroke-width="0.800"/><path d="M819 168h9" stroke="#c0c0c0" stroke-width="1.200"/>
<text x="832.0" y="165.1" font-size="9.6" fill="#a3a3a3" textLength="55.5" lengthAdjust="spacingAndGlyphs" >Shape Outline</text>
<path d="M890.6 161.8h2.8l-1.4 1.4z" fill="#a3a3a3"/>
<ellipse cx="824.500" cy="178" rx="4.500" ry="3.500" fill="#fff" stroke="#b0b0b0" stroke-width="0.800"/><path d="M820.500 180q4 4 8.500-.5" stroke="#c0c0c0" fill="none" stroke-width="1.400"/>
<text x="832.0" y="181.4" font-size="9.6" fill="#a3a3a3" textLength="53.5" lengthAdjust="spacingAndGlyphs" >Shape Effects</text>
<path d="M888.1 178.1h2.8l-1.4 1.4z" fill="#a3a3a3"/>
</g>
<g id="g-editing">
<circle cx="911.500" cy="143.500" r="3.300" fill="none" stroke="#2b6cb8" stroke-width="1.200"/><path d="M909 146l-4 4" stroke="#2b6cb8" stroke-width="1.400"/>
<text x="918.0" y="148.4" font-size="9.6" fill="#444444" textLength="15.8" lengthAdjust="spacingAndGlyphs" >Find</text>
<text x="904.5" y="160.6" font-size="6.0" fill="#8c4fb8" textLength="6.0" lengthAdjust="spacingAndGlyphs" >ab</text>
<text x="908.0" y="167.3" font-size="6.0" fill="#2b6cb8" textLength="6.0" lengthAdjust="spacingAndGlyphs" >ac</text>
<path d="M904 164.500h3M905.800 163l1.400 1.500l-1.400 1.500" stroke="#2b6cb8" fill="none" stroke-width="0.700"/>
<text x="918.0" y="164.9" font-size="9.6" fill="#444444" textLength="31.0" lengthAdjust="spacingAndGlyphs" >Replace</text>
<path d="M955.9 161.2h3.2l-1.6 1.6z" fill="#444444"/>
<path d="M907 173v9l2.300-2l1.600 3.400l1.300-.6l-1.600-3.300h3z" fill="#fff" stroke="#666" stroke-width="0.800"/>
<text x="918.0" y="181.4" font-size="9.6" fill="#444444" textLength="23.0" lengthAdjust="spacingAndGlyphs" >Select</text>
<path d="M944.4 178.0h3.2l-1.6 1.6z" fill="#444444"/>
</g>
</g>
<g id="thumb-items">
<defs><linearGradient id="ftg2" x1="0" x2="1"><stop offset="0" stop-color="#1c3f7c"/><stop offset="0.45" stop-color="#142b61"/><stop offset="1" stop-color="#0f1f4e"/></linearGradient>
<linearGradient id="t1g" x1="0" x2="0" y1="0" y2="1"><stop offset="0" stop-color="#1d4485"/><stop offset="0.55" stop-color="#15336e"/><stop offset="1" stop-color="#0e1e4a"/></linearGradient>
<linearGradient id="rb" x1="0" x2="1"><stop offset="0" stop-color="#e01818"/><stop offset=".35" stop-color="#f0d020"/><stop offset=".65" stop-color="#30b840"/><stop offset="1" stop-color="#1838c8"/></linearGradient>
<linearGradient id="bb" x1="0" x2="1"><stop offset="0" stop-color="#1030a8"/><stop offset=".5" stop-color="#2878e0"/><stop offset="1" stop-color="#0c2898"/></linearGradient>
<linearGradient id="sky" x1="0" x2="1" y1="0" y2="1"><stop offset="0" stop-color="#8fb6e2"/><stop offset=".5" stop-color="#cfe0f2"/><stop offset="1" stop-color="#e8eef4"/></linearGradient>
<filter id="tb" x="-5%" y="-5%" width="110%" height="110%"><feGaussianBlur stdDeviation="0.35"/></filter>
</defs>
<path d="M80.500 218.800v4.200h-4.200z" fill="#555"/>
<text x="86.8" y="224.1" font-size="9.8" fill="#555" textLength="60.8" lengthAdjust="spacingAndGlyphs" >Default Section</text>
<rect x="236.8" y="202.0" width="10.7" height="491.0" fill="#d9d9d9" />
<rect x="237.3" y="204.5" width="10.0" height="9.5" fill="#fff" />
<path d="M240 210.800l2.300-2.600l2.300 2.600z" fill="#555"/>
<rect x="237.3" y="214.5" width="10.0" height="63.5" fill="#fff" stroke="#cfcfcf" stroke-width="0.6" />
<rect x="237.3" y="682.0" width="10.0" height="10.0" fill="#fff" />
<path d="M240 685.800l2.300 2.600l2.300-2.600z" fill="#555"/>
<text x="74.5" y="242.1" font-size="11.5" fill="#555" textLength="5.5" lengthAdjust="spacingAndGlyphs" >1</text>
<text x="74.5" y="333.1" font-size="11.5" fill="#555" textLength="5.5" lengthAdjust="spacingAndGlyphs" >2</text>
<text x="74.5" y="425.1" font-size="11.5" fill="#d35230" textLength="5.5" lengthAdjust="spacingAndGlyphs" >3</text>
<text x="74.5" y="516.6" font-size="11.5" fill="#555" textLength="5.5" lengthAdjust="spacingAndGlyphs" >4</text>
<text x="74.5" y="608.1" font-size="11.5" fill="#555" textLength="5.5" lengthAdjust="spacingAndGlyphs" >5</text>
<path d="M77 521.0l.9 2.200l2.400.2l-1.800 1.600l.6 2.400l-2.100-1.300l-2.100 1.300l.6-2.400l-1.800-1.600l2.400-.2z" fill="#666"/>
<path d="M77 612.5l.9 2.200l2.400.2l-1.800 1.600l.6 2.400l-2.100-1.300l-2.100 1.300l.6-2.400l-1.800-1.600l2.400-.2z" fill="#666"/>
<g filter="url(#tb)">
<rect x="86.8" y="235.5" width="133.5" height="75.0" fill="url(#t1g)" />
<text x="161.8" y="244.8" font-size="4.3" fill="#fff" textLength="43.5" lengthAdjust="spacingAndGlyphs" font-weight="bold" text-anchor="middle" >ИНСПЕКТОРАТ ЗА РАД</text>
<text x="175.3" y="267.4" font-size="4.3" fill="#fff" textLength="50.0" lengthAdjust="spacingAndGlyphs" font-weight="bold" text-anchor="middle" >ИНСПЕКЦИЈСКИ НАДЗОРИ</text>
<text x="175.3" y="272.8" font-size="4.3" fill="#fff" textLength="56.0" lengthAdjust="spacingAndGlyphs" font-weight="bold" text-anchor="middle" >У ОБЛАСТИ РАДНИХ ОДНОСА</text>
<text x="175.3" y="278.2" font-size="4.3" fill="#fff" textLength="55.0" lengthAdjust="spacingAndGlyphs" font-weight="bold" text-anchor="middle" >И БЕЗБЕДНОСТИ И ЗДРАВЉА</text>
<text x="175.3" y="283.5" font-size="4.3" fill="#fff" textLength="17.0" lengthAdjust="spacingAndGlyphs" font-weight="bold" text-anchor="middle" >НА РАДУ</text>
<g transform="translate(107.0 252.3) scale(0.625)"><g fill="none" stroke="#b08f2e" stroke-width="1.500"><path d="M-8.500 12.500q-5-7 1.500-8.500q4-.5 7 2q3-2.500 7-2q6.500 1.500 1.500 8.500"/><path d="M0 5.500v7M-4.500 12q-2-4 4.500-6.500q6.500 2.500 4.500 6.500"/></g><path d="M-8.500 11.500h17l-1 4h-15z" fill="#a8872a"/><path d="M-0.700 0h1.400v1.600h1.500v1.300h-1.500v2.600h-1.400v-2.600h-1.500v-1.300h1.500z" fill="#c8a63c"/><path d="M-12.500 15.500h25v17.500q0 10.500-12.500 15q-12.500-4.500-12.500-15z" fill="#d63a32"/><path d="M-2.500 19l-2.500-1.500l-6.500 1v17l5 5l2.500-4l-.5-9zM2.500 19l2.500-1.500l6.500 1v17l-5 5l-2.500-4l.5-9z" fill="#efefef"/><path d="M-2.500 18.500q1-2.500 2.500 0q1.500-2.500 2.500 0l-1 6h-3zM-3.500 37h7l1.500 9h-10z" fill="#f2f2f2"/><path d="M-11 20.500h7M-11 24h6.500M-11 27.500h6M-11 31h6.500M4 20.500h7M4.500 24h6.500M5 27.500h6M4.500 31h6.500" stroke="#c9c9c9" stroke-width="0.700"/><path d="M-4.300 23h8.600v8q0 4-4.300 6q-4.300-2-4.300-6z" fill="#c92f2c"/><path d="M-0.700 24h1.400v4h3v1.400h-3v6h-1.400v-6h-3v-1.400h3z" fill="#fff"/><path d="M-9 38.500l3 1.500l-1 3.500l-3-1.500zM9 38.500l-3 1.500l1 3.500l3-1.500z" fill="#c9a030"/></g>
<rect x="118.5" y="262.0" width="11.0" height="0.6" fill="#7f97c4" />
<rect x="118.5" y="264.0" width="15.0" height="0.6" fill="#7f97c4" />
<rect x="118.5" y="266.0" width="14.0" height="0.6" fill="#7f97c4" />
<rect x="118.5" y="268.0" width="9.0" height="0.6" fill="#7f97c4" />
<rect x="118.5" y="273.0" width="7.0" height="0.6" fill="#7f97c4" />
<rect x="118.5" y="275.0" width="13.0" height="0.6" fill="#7f97c4" />
<rect x="118.5" y="277.0" width="14.0" height="0.6" fill="#7f97c4" />
<rect x="118.5" y="279.0" width="11.0" height="0.6" fill="#7f97c4" />
<rect x="86.8" y="326.5" width="133.5" height="75.8" fill="#fff" />
<rect x="95.0" y="331.0" width="29.3" height="4.5" fill="#c5e0b4" />
<rect x="88.3" y="338.8" width="47.2" height="7.5" fill="#c5e0b4" />
<rect x="89.0" y="348.3" width="46.0" height="9.0" fill="#dcdcdc" />
<rect x="89.0" y="358.8" width="46.0" height="6.0" fill="#dcdcdc" />
<rect x="89.0" y="367.3" width="46.0" height="3.9" fill="#dcdcdc" />
<rect x="89.0" y="374.2" width="46.0" height="6.3" fill="#dcdcdc" />
<rect x="89.0" y="382.3" width="46.0" height="3.9" fill="#dcdcdc" />
<rect x="173.0" y="330.7" width="43.5" height="7.0" fill="#c5e0b4" />
<rect x="189.5" y="345.7" width="24.0" height="4.1" fill="#dcdcdc" />
<rect x="189.5" y="354.3" width="24.0" height="6.0" fill="#dcdcdc" />
<rect x="189.5" y="367.0" width="24.0" height="6.0" fill="#dcdcdc" />
<rect x="146.8" y="376.8" width="69.0" height="9.0" fill="#dcdcdc" />
<rect x="93.0" y="351.0" width="38.0" height="1.1" fill="#3a3a3a" opacity=".75"/>
<rect x="93.0" y="353.5" width="38.0" height="1.1" fill="#3a3a3a" opacity=".75"/>
<rect x="98.0" y="356.0" width="25.0" height="1.1" fill="#3a3a3a" opacity=".75"/>
<rect x="96.0" y="360.5" width="30.0" height="1.1" fill="#3a3a3a" opacity=".75"/>
<rect x="96.0" y="362.8" width="30.0" height="1.1" fill="#3a3a3a" opacity=".75"/>
<rect x="96.0" y="369.3" width="32.0" height="1.1" fill="#3a3a3a" opacity=".75"/>
<rect x="99.0" y="376.2" width="24.0" height="1.1" fill="#3a3a3a" opacity=".75"/>
<rect x="99.0" y="378.5" width="24.0" height="1.1" fill="#3a3a3a" opacity=".75"/>
<rect x="92.0" y="384.3" width="41.0" height="1.1" fill="#3a3a3a" opacity=".75"/>
<rect x="193.0" y="347.8" width="17.0" height="1.1" fill="#3a3a3a" opacity=".75"/>
<rect x="195.0" y="356.3" width="13.0" height="1.1" fill="#3a3a3a" opacity=".75"/>
<rect x="195.0" y="358.6" width="13.0" height="1.1" fill="#3a3a3a" opacity=".75"/>
<rect x="194.0" y="369.0" width="15.0" height="1.1" fill="#3a3a3a" opacity=".75"/>
<rect x="195.0" y="371.3" width="12.0" height="1.1" fill="#3a3a3a" opacity=".75"/>
<rect x="149.0" y="379.5" width="65.0" height="1.1" fill="#3a3a3a" opacity=".75"/>
<rect x="151.0" y="382.0" width="61.0" height="1.1" fill="#3a3a3a" opacity=".75"/>
<rect x="173.0" y="384.5" width="14.0" height="1.1" fill="#3a3a3a" opacity=".75"/>
<text x="109.6" y="333.9" font-size="2.6" fill="#222" textLength="19.0" lengthAdjust="spacingAndGlyphs" font-weight="bold" text-anchor="middle" >ЗАКОН О РАДУ</text>
<text x="111.9" y="341.9" font-size="2.6" fill="#222" textLength="38.0" lengthAdjust="spacingAndGlyphs" font-weight="bold" text-anchor="middle" >ЗАКОН О ИНСПЕКЦИЈСКОМ</text>
<text x="111.9" y="344.8" font-size="2.6" fill="#222" textLength="13.0" lengthAdjust="spacingAndGlyphs" font-weight="bold" text-anchor="middle" >НАДЗОРУ</text>
<text x="194.8" y="333.6" font-size="2.6" fill="#222" textLength="38.0" lengthAdjust="spacingAndGlyphs" font-weight="bold" text-anchor="middle" >ЗАКОН О БЕЗБЕДНОСТИ И</text>
<text x="194.8" y="336.5" font-size="2.6" fill="#222" textLength="27.0" lengthAdjust="spacingAndGlyphs" font-weight="bold" text-anchor="middle" >ЗДРАВЉУ НА РАДУ</text>
<path d="M141.500 332v54.500" stroke="#3f86d0" stroke-width="1.400"/>
<path d="M142.500 333.3h-3M140 333.3l-3 0" stroke="#3f86d0" stroke-width="1.300"/><path d="M136.800 333.3l3-2v4z" fill="#3f86d0"/>
<path d="M142.500 342.6h-3M140 342.6l-3 0" stroke="#3f86d0" stroke-width="1.300"/><path d="M136.800 342.6l3-2v4z" fill="#3f86d0"/>
<path d="M142.500 352.8h-3M140 352.8l-3 0" stroke="#3f86d0" stroke-width="1.300"/><path d="M136.800 352.8l3-2v4z" fill="#3f86d0"/>
<path d="M142.500 361.8h-3M140 361.8l-3 0" stroke="#3f86d0" stroke-width="1.300"/><path d="M136.800 361.8l3-2v4z" fill="#3f86d0"/>
<path d="M142.500 369.3h-3M140 369.3l-3 0" stroke="#3f86d0" stroke-width="1.300"/><path d="M136.800 369.3l3-2v4z" fill="#3f86d0"/>
<path d="M142.500 377.3h-3M140 377.3l-3 0" stroke="#3f86d0" stroke-width="1.300"/><path d="M136.800 377.3l3-2v4z" fill="#3f86d0"/>
<path d="M142.500 384.3h-3M140 384.3l-3 0" stroke="#3f86d0" stroke-width="1.300"/><path d="M136.800 384.3l3-2v4z" fill="#3f86d0"/>
<rect x="146.0" y="354.7" width="30.8" height="11.6" fill="#263754" />
<text x="161.4" y="358.7" font-size="3.2" fill="#f2e000" textLength="26.0" lengthAdjust="spacingAndGlyphs" font-weight="bold" text-anchor="middle" >НАДЛЕЖНОСТИ</text>
<text x="161.4" y="361.9" font-size="3.2" fill="#f2e000" textLength="24.0" lengthAdjust="spacingAndGlyphs" font-weight="bold" text-anchor="middle" >ИНСПЕКЦИЈЕ</text>
<text x="161.4" y="365.1" font-size="3.2" fill="#f2e000" textLength="9.0" lengthAdjust="spacingAndGlyphs" font-weight="bold" text-anchor="middle" >РАДА</text>
<path d="M167 354.700v-21h4" stroke="#3f86d0" stroke-width="1.600" fill="none"/><path d="M172.500 333.700l-3-2.200v4.400z" fill="#3f86d0"/>
<path d="M158 366.300v8" stroke="#3f86d0" stroke-width="1.600"/><path d="M158 376.800l-2.200-3h4.400z" fill="#3f86d0"/>
<path d="M182.800 337.800v33" stroke="#9cc3ea" stroke-width="0.800"/>
<path d="M182.800 347.8h4" stroke="#3f86d0" stroke-width="1.300"/><path d="M189.300 347.8l-3-2v4z" fill="#3f86d0"/>
<path d="M182.800 357.3h4" stroke="#3f86d0" stroke-width="1.300"/><path d="M189.300 357.3l-3-2v4z" fill="#3f86d0"/>
<path d="M182.800 370.0h4" stroke="#3f86d0" stroke-width="1.300"/><path d="M189.300 370.0l-3-2v4z" fill="#3f86d0"/>
<rect x="86.8" y="390.3" width="133.5" height="12.0" fill="url(#ftg2)" /><g opacity=".9"><g transform="translate(153.2 392.1) scale(0.188)"><g fill="none" stroke="#b08f2e" stroke-width="1.500"><path d="M-8.500 12.500q-5-7 1.500-8.500q4-.5 7 2q3-2.500 7-2q6.500 1.500 1.500 8.500"/><path d="M0 5.500v7M-4.500 12q-2-4 4.500-6.500q6.500 2.500 4.500 6.500"/></g><path d="M-8.500 11.500h17l-1 4h-15z" fill="#a8872a"/><path d="M-0.700 0h1.400v1.600h1.500v1.300h-1.500v2.600h-1.400v-2.600h-1.500v-1.300h1.500z" fill="#c8a63c"/><path d="M-12.500 15.500h25v17.500q0 10.500-12.500 15q-12.500-4.500-12.500-15z" fill="#d63a32"/><path d="M-2.500 19l-2.500-1.500l-6.500 1v17l5 5l2.500-4l-.5-9zM2.500 19l2.500-1.500l6.500 1v17l-5 5l-2.500-4l.5-9z" fill="#efefef"/><path d="M-2.500 18.500q1-2.500 2.500 0q1.500-2.500 2.500 0l-1 6h-3zM-3.500 37h7l1.500 9h-10z" fill="#f2f2f2"/><path d="M-11 20.500h7M-11 24h6.500M-11 27.500h6M-11 31h6.500M4 20.500h7M4.500 24h6.500M5 27.500h6M4.500 31h6.500" stroke="#c9c9c9" stroke-width="0.700"/><path d="M-4.300 23h8.600v8q0 4-4.300 6q-4.300-2-4.300-6z" fill="#c92f2c"/><path d="M-0.700 24h1.400v4h3v1.400h-3v6h-1.400v-6h-3v-1.400h3z" fill="#fff"/><path d="M-9 38.500l3 1.500l-1 3.500l-3-1.500zM9 38.500l-3 1.500l1 3.500l3-1.500z" fill="#c9a030"/></g></g><rect x="141.8" y="394.3" width="7.4" height="0.7" fill="#8ea2c8" /><rect x="141.0" y="396.0" width="8.2" height="0.7" fill="#8ea2c8" /><rect x="140.2" y="397.7" width="9.0" height="0.7" fill="#8ea2c8" /><rect x="157.7" y="394.3" width="9.0" height="0.7" fill="#8ea2c8" /><rect x="157.7" y="396.0" width="8.0" height="0.7" fill="#8ea2c8" /><rect x="157.7" y="397.7" width="7.0" height="0.7" fill="#8ea2c8" />
<rect x="84.8" y="417.0" width="137.5" height="78.5" fill="#fff" stroke="#d35230" stroke-width="2" />
<use href="#slidecontent" transform="translate(30.695 382.959) scale(0.16884)"/>
<rect x="86.8" y="509.8" width="133.5" height="76.0" fill="#fff" />
<text x="92.0" y="516.5" font-size="2.8" fill="#333" textLength="27.0" lengthAdjust="spacingAndGlyphs" font-weight="bold" >БРОЈ ПОСЛОДАВАЦА</text>
<rect x="87.2" y="518.8" width="46.5" height="0.6" fill="#8ab4e4" />
<text x="92.0" y="523.0" font-size="2.8" fill="#333" textLength="36.0" lengthAdjust="spacingAndGlyphs" font-weight="bold" >БРОЈ ИНСПЕКТОРА РАДА</text>
<text x="137.0" y="522.0" font-size="7.6" fill="#e01010" textLength="28.5" lengthAdjust="spacingAndGlyphs" font-weight="bold" >= 2.066</text>
<text x="172.3" y="516.5" font-size="2.8" fill="#444" textLength="26.2" lengthAdjust="spacingAndGlyphs" font-weight="bold" >ПОСЛОДАВАЦА</text>
<polygon points="182.3,525.7 182.6,521.1 187.4,521.1 187.7,525.7 194.2,527.8 197.1,524.3 201.0,527.1 198.5,531.0 202.5,536.5 207.0,535.3 208.5,539.9 204.2,541.6 204.2,548.4 208.5,550.1 207.0,554.7 202.5,553.5 198.5,559.0 201.0,562.9 197.1,565.7 194.2,562.2 187.7,564.3 187.4,568.9 182.6,568.9 182.3,564.3 175.8,562.2 172.9,565.7 169.0,562.9 171.5,559.0 167.5,553.5 163.0,554.7 161.5,550.1 165.8,548.4 165.8,541.6 161.5,539.9 163.0,535.3 167.5,536.5 171.5,531.0 169.0,527.1 172.9,524.3 175.8,527.8" fill="#d60000"/>
<circle cx="185" cy="545" r="19.800" fill="#d60000"/>
<text x="185.0" y="546.6" font-size="4.8" fill="#fff" textLength="22.0" lengthAdjust="spacingAndGlyphs" font-weight="bold" text-anchor="middle" >446.249</text>
<path d="M192.500 523.300q22 4 24.500 24q1 8-8 12.500" fill="none" stroke="#a9c9ee" stroke-width="1.600"/>
<path d="M105.500 546.200l1.700 3h3.500l-1.700 3l1.700 3h-3.500l-1.700 3l-1.700-3h-3.500l1.700-3l-1.700-3h3.500z" fill="#5b9bd5"/>
<path d="M104 540.500q-7 4-6.800 12" fill="none" stroke="#a9c9ee" stroke-width="0.800"/>
<text x="99.5" y="565.9" font-size="2.8" fill="#333" textLength="18.5" lengthAdjust="spacingAndGlyphs" font-weight="bold" >ИНСПЕКТОРА</text>
<text x="99.5" y="568.7" font-size="2.8" fill="#333" textLength="7.5" lengthAdjust="spacingAndGlyphs" font-weight="bold" >РАДА</text>
<rect x="86.8" y="573.5" width="133.5" height="12.3" fill="url(#ftg2)" /><g opacity=".9"><g transform="translate(153.2 575.3) scale(0.194)"><g fill="none" stroke="#b08f2e" stroke-width="1.500"><path d="M-8.500 12.500q-5-7 1.500-8.500q4-.5 7 2q3-2.500 7-2q6.500 1.500 1.500 8.500"/><path d="M0 5.500v7M-4.500 12q-2-4 4.500-6.500q6.500 2.500 4.500 6.500"/></g><path d="M-8.500 11.500h17l-1 4h-15z" fill="#a8872a"/><path d="M-0.700 0h1.400v1.600h1.500v1.300h-1.500v2.600h-1.400v-2.600h-1.500v-1.300h1.500z" fill="#c8a63c"/><path d="M-12.500 15.500h25v17.500q0 10.500-12.500 15q-12.500-4.500-12.500-15z" fill="#d63a32"/><path d="M-2.500 19l-2.500-1.500l-6.500 1v17l5 5l2.500-4l-.5-9zM2.500 19l2.500-1.500l6.500 1v17l-5 5l-2.500-4l.5-9z" fill="#efefef"/><path d="M-2.500 18.500q1-2.500 2.500 0q1.500-2.500 2.500 0l-1 6h-3zM-3.500 37h7l1.500 9h-10z" fill="#f2f2f2"/><path d="M-11 20.500h7M-11 24h6.500M-11 27.500h6M-11 31h6.500M4 20.500h7M4.500 24h6.500M5 27.500h6M4.500 31h6.500" stroke="#c9c9c9" stroke-width="0.700"/><path d="M-4.300 23h8.600v8q0 4-4.300 6q-4.300-2-4.300-6z" fill="#c92f2c"/><path d="M-0.700 24h1.400v4h3v1.400h-3v6h-1.400v-6h-3v-1.400h3z" fill="#fff"/><path d="M-9 38.500l3 1.500l-1 3.500l-3-1.500zM9 38.500l-3 1.500l1 3.500l3-1.500z" fill="#c9a030"/></g></g><rect x="141.8" y="577.5" width="7.4" height="0.7" fill="#8ea2c8" /><rect x="141.0" y="579.2" width="8.2" height="0.7" fill="#8ea2c8" /><rect x="140.2" y="580.9" width="9.0" height="0.7" fill="#8ea2c8" /><rect x="157.7" y="577.5" width="9.0" height="0.7" fill="#8ea2c8" /><rect x="157.7" y="579.2" width="8.0" height="0.7" fill="#8ea2c8" /><rect x="157.7" y="580.9" width="7.0" height="0.7" fill="#8ea2c8" />
<rect x="86.8" y="601.2" width="133.5" height="75.8" fill="#fff" />
<rect x="86.8" y="602.0" width="86.3" height="63.8" fill="#dfe4ea" />
<path d="M86.750 628h16l4 10l-2 28h-18z" fill="#8db5e3"/><path d="M86.750 640q6-4 10 2q-4 6-10 4zM88 655q5-3 8 1q-3 4-8 3z" fill="#eef3f8"/>
<path d="M86.750 602h40v12l-14 8l-10 14l-16-6z" fill="#8f9aa8"/><path d="M100 602h22v10l-10 6l-12-4z" fill="#565c66"/>
<path d="M89 612q3-5 8-4l4 8l-2 14l-8 4l-2-10z" fill="#c8623a"/><path d="M92 607q2-2 4 0l-.5 3h-3z" fill="#e8b088"/>
<path d="M94 648q1-9 5-10q5 0 5 8l1 20h-11z" fill="#6c7f98"/><path d="M96.500 637q2.500-3 5 0l-.6 3.500h-3.800z" fill="#e6d2a8"/><path d="M104 646l8-6" stroke="#b0b4b8" stroke-width="0.800"/>
<path d="M108 620l10-4l4 10l-8 6z" fill="#7a7468"/><path d="M112 640l8-4l6 6l-4 14l-10 2z" fill="#5e5a52"/>
<rect x="124.7" y="614.8" width="52.8" height="4.0" fill="#3a4656" />
<rect x="124.7" y="626.0" width="52.8" height="2.7" fill="#4a5260" />
<rect x="124.7" y="635.8" width="52.8" height="2.7" fill="#4a5260" />
<rect x="124.7" y="645.8" width="52.8" height="2.7" fill="#4a5260" />
<rect x="124.7" y="654.8" width="52.8" height="2.7" fill="#4a5260" />
<rect x="110.0" y="603.8" width="100.5" height="11.0" fill="#b10f2b" rx="2" />
<rect x="136.0" y="606.5" width="48.0" height="1.3" fill="#fff" />
<rect x="139.0" y="611.0" width="43.0" height="1.3" fill="#fff" />
<rect x="124.7" y="618.5" width="52.8" height="7.5" fill="#4a80d9" rx="0.8" />
<rect x="131.0" y="620.6" width="40.0" height="1.0" fill="#fff" opacity=".85"/>
<rect x="141.0" y="623.0" width="20.0" height="1.0" fill="#fff" opacity=".85"/>
<path d="M180.5 620.2L195.3 620.2V618.5L200.8 622.2L195.3 626.0V624.3L180.5 624.3L182.5 622.2z" fill="url(#bb)"/>
<circle cx="120.500" cy="622.2" r="3.300" fill="#f2cf2a"/>
<rect x="124.7" y="628.7" width="52.8" height="7.1" fill="#2ab9c9" rx="0.8" />
<rect x="131.0" y="630.6" width="40.0" height="1.0" fill="#fff" opacity=".85"/>
<rect x="141.0" y="633.0" width="20.0" height="1.0" fill="#fff" opacity=".85"/>
<path d="M180.5 630.2L195.3 630.2V628.5L200.8 632.2L195.3 636.0V634.3L180.5 634.3L182.5 632.2z" fill="url(#rb)"/>
<circle cx="120.500" cy="632.2" r="3.300" fill="#4a4a46"/>
<rect x="124.7" y="638.3" width="52.8" height="7.5" fill="#2bc099" rx="0.8" />
<rect x="131.0" y="640.4" width="40.0" height="1.0" fill="#fff" opacity=".85"/>
<rect x="141.0" y="642.8" width="20.0" height="1.0" fill="#fff" opacity=".85"/>
<path d="M180.5 640.0L195.3 640.0V638.3L200.8 642.0L195.3 645.8V644.1L180.5 644.1L182.5 642.0z" fill="url(#rb)"/>
<circle cx="120.500" cy="642.0" r="3.300" fill="#4a4a46"/>
<rect x="124.7" y="647.8" width="52.8" height="7.0" fill="#3cc569" rx="0.8" />
<rect x="131.0" y="649.7" width="40.0" height="1.0" fill="#fff" opacity=".85"/>
<rect x="141.0" y="652.1" width="20.0" height="1.0" fill="#fff" opacity=".85"/>
<path d="M180.5 649.2L195.3 649.2V647.5L200.8 651.3L195.3 655.0V653.4L180.5 653.4L182.5 651.3z" fill="url(#rb)"/>
<circle cx="120.500" cy="651.3" r="3.300" fill="#4a4a46"/>
<rect x="124.7" y="657.5" width="52.8" height="7.1" fill="#7bc74b" rx="0.8" />
<rect x="131.0" y="659.4" width="40.0" height="1.0" fill="#fff" opacity=".85"/>
<rect x="141.0" y="661.8" width="20.0" height="1.0" fill="#fff" opacity=".85"/>
<path d="M180.5 659.0L195.3 659.0V657.3L200.8 661.0L195.3 664.8V663.1L180.5 663.1L182.5 661.0z" fill="url(#rb)"/>
<circle cx="120.500" cy="661.0" r="3.300" fill="#4a4a46"/>
<text x="205.0" y="623.5" font-size="4.4" fill="#2a4aa8" textLength="13.0" lengthAdjust="spacingAndGlyphs" font-weight="bold" >65.043</text>
<text x="206.5" y="633.7" font-size="4.4" fill="#2a4aa8" textLength="11.0" lengthAdjust="spacingAndGlyphs" font-weight="bold" >32.353</text>
<text x="206.5" y="643.7" font-size="4.4" fill="#2a4aa8" textLength="11.0" lengthAdjust="spacingAndGlyphs" font-weight="bold" >32.414</text>
<text x="211.0" y="653.0" font-size="4.4" fill="#2a4aa8" textLength="5.0" lengthAdjust="spacingAndGlyphs" font-weight="bold" >276</text>
<text x="202.5" y="662.5" font-size="4.4" fill="#2a4aa8" textLength="16.0" lengthAdjust="spacingAndGlyphs" font-weight="bold" >109.055.380</text>
<rect x="86.8" y="665.8" width="133.5" height="11.2" fill="url(#ftg2)" /><g opacity=".9"><g transform="translate(153.2 667.6) scale(0.171)"><g fill="none" stroke="#b08f2e" stroke-width="1.500"><path d="M-8.500 12.500q-5-7 1.500-8.500q4-.5 7 2q3-2.500 7-2q6.500 1.500 1.500 8.500"/><path d="M0 5.500v7M-4.500 12q-2-4 4.500-6.500q6.500 2.500 4.500 6.500"/></g><path d="M-8.500 11.500h17l-1 4h-15z" fill="#a8872a"/><path d="M-0.700 0h1.400v1.600h1.500v1.300h-1.500v2.600h-1.400v-2.600h-1.500v-1.300h1.500z" fill="#c8a63c"/><path d="M-12.500 15.500h25v17.500q0 10.500-12.500 15q-12.500-4.500-12.500-15z" fill="#d63a32"/><path d="M-2.500 19l-2.500-1.500l-6.500 1v17l5 5l2.500-4l-.5-9zM2.500 19l2.500-1.500l6.500 1v17l-5 5l-2.500-4l.5-9z" fill="#efefef"/><path d="M-2.500 18.500q1-2.500 2.500 0q1.500-2.500 2.500 0l-1 6h-3zM-3.500 37h7l1.500 9h-10z" fill="#f2f2f2"/><path d="M-11 20.500h7M-11 24h6.500M-11 27.500h6M-11 31h6.500M4 20.500h7M4.500 24h6.500M5 27.500h6M4.500 31h6.500" stroke="#c9c9c9" stroke-width="0.700"/><path d="M-4.300 23h8.600v8q0 4-4.300 6q-4.300-2-4.300-6z" fill="#c92f2c"/><path d="M-0.700 24h1.400v4h3v1.400h-3v6h-1.400v-6h-3v-1.400h3z" fill="#fff"/><path d="M-9 38.500l3 1.500l-1 3.500l-3-1.500zM9 38.500l-3 1.500l1 3.500l3-1.500z" fill="#c9a030"/></g></g><rect x="141.8" y="669.8" width="7.4" height="0.7" fill="#8ea2c8" /><rect x="141.0" y="671.5" width="8.2" height="0.7" fill="#8ea2c8" /><rect x="140.2" y="673.2" width="9.0" height="0.7" fill="#8ea2c8" /><rect x="157.7" y="669.8" width="9.0" height="0.7" fill="#8ea2c8" /><rect x="157.7" y="671.5" width="8.0" height="0.7" fill="#8ea2c8" /><rect x="157.7" y="673.2" width="7.0" height="0.7" fill="#8ea2c8" />
</g>
</g>
<defs><linearGradient id="ftg" x1="0" x2="1" y1="0" y2="0"><stop offset="0" stop-color="#1c3f7c"/><stop offset="0.42" stop-color="#142b61"/><stop offset="1" stop-color="#0f1f4e"/></linearGradient>
<clipPath id="mapclip"><path d="M746.5 252.5Q744.0 240.0 747.5 235.5Q751.0 231.0 768.0 227.0Q785.0 223.0 787.5 219.5Q790.0 216.0 795.0 214.5Q800.0 213.0 810.0 212.5Q820.0 212.0 828.0 212.5Q836.0 213.0 842.5 216.0Q849.0 219.0 850.5 223.0Q852.0 227.0 855.0 231.0Q858.0 235.0 863.0 240.5Q868.0 246.0 872.0 249.0Q876.0 252.0 881.0 253.5Q886.0 255.0 885.0 262.0Q884.0 269.0 886.5 277.0Q889.0 285.0 892.0 289.0Q895.0 293.0 903.5 296.0Q912.0 299.0 914.0 302.0Q916.0 305.0 926.5 311.0Q937.0 317.0 935.5 323.0Q934.0 329.0 937.0 335.0Q940.0 341.0 935.0 345.0Q930.0 349.0 928.0 350.0Q926.0 351.0 932.0 354.0Q938.0 357.0 942.0 361.0Q946.0 365.0 954.0 367.0Q962.0 369.0 968.0 372.0Q974.0 375.0 980.0 378.0Q986.0 381.0 988.0 376.0Q990.0 371.0 992.0 368.0Q994.0 365.0 999.5 363.0Q1005.0 361.0 1011.5 365.0Q1018.0 369.0 1023.5 372.5Q1029.0 376.0 1025.5 379.0Q1022.0 382.0 1018.0 387.5Q1014.0 393.0 1018.0 399.0Q1022.0 405.0 1021.0 410.0Q1020.0 415.0 1014.0 418.0Q1008.0 421.0 1007.5 427.0Q1007.0 433.0 1004.5 438.0Q1002.0 443.0 1002.5 451.0Q1003.0 459.0 1005.5 464.0Q1008.0 469.0 1010.0 475.5Q1012.0 482.0 1016.0 487.0Q1020.0 492.0 1025.0 494.0Q1030.0 496.0 1034.0 501.0Q1038.0 506.0 1044.0 510.5Q1050.0 515.0 1048.0 519.5Q1046.0 524.0 1041.0 529.0Q1036.0 534.0 1033.0 540.0Q1030.0 546.0 1023.0 547.0Q1016.0 548.0 1012.0 551.0Q1008.0 554.0 1009.0 558.0Q1010.0 562.0 1009.0 569.0Q1008.0 576.0 1012.0 581.0Q1016.0 586.0 1016.5 590.0Q1017.0 594.0 1013.5 598.0Q1010.0 602.0 1005.0 602.5Q1000.0 603.0 993.0 604.5Q986.0 606.0 980.0 604.5Q974.0 603.0 969.0 604.5Q964.0 606.0 958.0 609.0Q952.0 612.0 946.0 611.0Q940.0 610.0 934.0 613.0Q928.0 616.0 926.0 621.0Q924.0 626.0 921.0 627.0Q918.0 628.0 914.0 623.0Q910.0 618.0 903.0 621.0Q896.0 624.0 890.0 627.0Q884.0 630.0 883.0 633.0Q882.0 636.0 881.0 644.5Q880.0 653.0 875.0 657.5Q870.0 662.0 868.5 659.5Q867.0 657.0 868.5 650.5Q870.0 644.0 868.0 640.0Q866.0 636.0 866.0 629.0Q866.0 622.0 863.0 615.0Q860.0 608.0 852.0 605.0Q844.0 602.0 842.0 597.0Q840.0 592.0 836.0 585.0Q832.0 578.0 829.5 569.5Q827.0 561.0 839.5 556.5Q852.0 552.0 851.0 548.0Q850.0 544.0 842.0 540.5Q834.0 537.0 830.0 532.5Q826.0 528.0 821.0 526.0Q816.0 524.0 808.0 520.0Q800.0 516.0 795.0 510.0Q790.0 504.0 785.0 498.0Q780.0 492.0 773.0 486.0Q766.0 480.0 774.5 472.5Q783.0 465.0 781.5 455.0Q780.0 445.0 775.5 438.0Q771.0 431.0 772.0 423.0Q773.0 415.0 769.5 410.0Q766.0 405.0 763.5 398.0Q761.0 391.0 763.0 384.0Q765.0 377.0 769.5 372.0Q774.0 367.0 775.0 362.0Q776.0 357.0 768.0 353.0Q760.0 349.0 757.0 345.0Q754.0 341.0 759.0 335.0Q764.0 329.0 763.0 323.0Q762.0 317.0 764.0 312.0Q766.0 307.0 759.5 299.0Q753.0 291.0 755.5 286.5Q758.0 282.0 754.5 278.0Q751.0 274.0 750.0 269.5Q749.0 265.0 746.5 252.5z"/></clipPath>
<filter id="soft" x="-5%" y="-5%" width="110%" height="110%"><feGaussianBlur stdDeviation="0.45"/></filter>
</defs>
<g id="slidecontent">
<g id="watermark" fill="none" stroke="#f4f3f4" stroke-width="1.3">
<path d="M637 337h193v120q0 92-96.500 122q-96.500-30-96.500-122z"/>
<path d="M692 405h82v68q0 32-41 46q-41-14-41-46z"/><path d="M733 405v114M692 452h82"/>
<path d="M655 331q-12-58 78-81q90 23 78 81z"/><path d="M660 318h146M733 250v-14M726 242h14"/><path d="M690 331q-8-40 43-78M776 331q8-40-43-78"/>
<path d="M650 350q-10 70 30 150M664 352q-6 60 26 120M816 350q10 70-30 150"/><path d="M712 430a7 7 0 1 0 0 .1M712 478a7 7 0 1 0 0 .1M756 430a7 7 0 1 0 0 .1M756 478a7 7 0 1 0 0 .1" stroke-width="1"/>
</g>
<rect x="332.0" y="583.6" width="790.7" height="72.2" fill="url(#ftg)" />
<g id="title" font-weight="bold" fill="#2e3a4e">
<text x="368.6" y="344.4" font-size="28.6" fill="#2e3a4e" textLength="216.0" lengthAdjust="spacingAndGlyphs" style="filter:drop-shadow(1px 1px 0.8px rgba(0,0,0,.35))">ТЕРИТОРИЈАЛНА</text>
<text x="368.6" y="377.2" font-size="28.6" fill="#2e3a4e" textLength="201.0" lengthAdjust="spacingAndGlyphs" style="filter:drop-shadow(1px 1px 0.8px rgba(0,0,0,.35))">ОРГАНИЗАЦИЈА</text>
</g>
<text x="475.6" y="502.0" font-size="13.0" fill="#222" textLength="61.0" lengthAdjust="spacingAndGlyphs" >ЛЕГЕНДА:</text>
<polygon points="520.2,507.6 527.2,514.6 520.2,521.6 513.2,514.6" fill="#13245c" stroke="#e8c860" stroke-width="0.7"/>
<text x="535.0" y="519.9" font-size="13.0" fill="#1a1a1a" textLength="170.0" lengthAdjust="spacingAndGlyphs" >Одељење инспекције рада</text>
<polygon points="520.2,527.3 527.7,537.5 512.7,537.5" fill="#cf1a0a" stroke="#f2a63a" stroke-width="0.8"/>
<text x="535.0" y="537.9" font-size="13.0" fill="#1a1a1a" textLength="146.0" lengthAdjust="spacingAndGlyphs" >Одсек инспекције рада</text>
<g id="map">
<path d="M746.5 252.5Q744.0 240.0 747.5 235.5Q751.0 231.0 768.0 227.0Q785.0 223.0 787.5 219.5Q790.0 216.0 795.0 214.5Q800.0 213.0 810.0 212.5Q820.0 212.0 828.0 212.5Q836.0 213.0 842.5 216.0Q849.0 219.0 850.5 223.0Q852.0 227.0 855.0 231.0Q858.0 235.0 863.0 240.5Q868.0 246.0 872.0 249.0Q876.0 252.0 881.0 253.5Q886.0 255.0 885.0 262.0Q884.0 269.0 886.5 277.0Q889.0 285.0 892.0 289.0Q895.0 293.0 903.5 296.0Q912.0 299.0 914.0 302.0Q916.0 305.0 926.5 311.0Q937.0 317.0 935.5 323.0Q934.0 329.0 937.0 335.0Q940.0 341.0 935.0 345.0Q930.0 349.0 928.0 350.0Q926.0 351.0 932.0 354.0Q938.0 357.0 942.0 361.0Q946.0 365.0 954.0 367.0Q962.0 369.0 968.0 372.0Q974.0 375.0 980.0 378.0Q986.0 381.0 988.0 376.0Q990.0 371.0 992.0 368.0Q994.0 365.0 999.5 363.0Q1005.0 361.0 1011.5 365.0Q1018.0 369.0 1023.5 372.5Q1029.0 376.0 1025.5 379.0Q1022.0 382.0 1018.0 387.5Q1014.0 393.0 1018.0 399.0Q1022.0 405.0 1021.0 410.0Q1020.0 415.0 1014.0 418.0Q1008.0 421.0 1007.5 427.0Q1007.0 433.0 1004.5 438.0Q1002.0 443.0 1002.5 451.0Q1003.0 459.0 1005.5 464.0Q1008.0 469.0 1010.0 475.5Q1012.0 482.0 1016.0 487.0Q1020.0 492.0 1025.0 494.0Q1030.0 496.0 1034.0 501.0Q1038.0 506.0 1044.0 510.5Q1050.0 515.0 1048.0 519.5Q1046.0 524.0 1041.0 529.0Q1036.0 534.0 1033.0 540.0Q1030.0 546.0 1023.0 547.0Q1016.0 548.0 1012.0 551.0Q1008.0 554.0 1009.0 558.0Q1010.0 562.0 1009.0 569.0Q1008.0 576.0 1012.0 581.0Q1016.0 586.0 1016.5 590.0Q1017.0 594.0 1013.5 598.0Q1010.0 602.0 1005.0 602.5Q1000.0 603.0 993.0 604.5Q986.0 606.0 980.0 604.5Q974.0 603.0 969.0 604.5Q964.0 606.0 958.0 609.0Q952.0 612.0 946.0 611.0Q940.0 610.0 934.0 613.0Q928.0 616.0 926.0 621.0Q924.0 626.0 921.0 627.0Q918.0 628.0 914.0 623.0Q910.0 618.0 903.0 621.0Q896.0 624.0 890.0 627.0Q884.0 630.0 883.0 633.0Q882.0 636.0 881.0 644.5Q880.0 653.0 875.0 657.5Q870.0 662.0 868.5 659.5Q867.0 657.0 868.5 650.5Q870.0 644.0 868.0 640.0Q866.0 636.0 866.0 629.0Q866.0 622.0 863.0 615.0Q860.0 608.0 852.0 605.0Q844.0 602.0 842.0 597.0Q840.0 592.0 836.0 585.0Q832.0 578.0 829.5 569.5Q827.0 561.0 839.5 556.5Q852.0 552.0 851.0 548.0Q850.0 544.0 842.0 540.5Q834.0 537.0 830.0 532.5Q826.0 528.0 821.0 526.0Q816.0 524.0 808.0 520.0Q800.0 516.0 795.0 510.0Q790.0 504.0 785.0 498.0Q780.0 492.0 773.0 486.0Q766.0 480.0 774.5 472.5Q783.0 465.0 781.5 455.0Q780.0 445.0 775.5 438.0Q771.0 431.0 772.0 423.0Q773.0 415.0 769.5 410.0Q766.0 405.0 763.5 398.0Q761.0 391.0 763.0 384.0Q765.0 377.0 769.5 372.0Q774.0 367.0 775.0 362.0Q776.0 357.0 768.0 353.0Q760.0 349.0 757.0 345.0Q754.0 341.0 759.0 335.0Q764.0 329.0 763.0 323.0Q762.0 317.0 764.0 312.0Q766.0 307.0 759.5 299.0Q753.0 291.0 755.5 286.5Q758.0 282.0 754.5 278.0Q751.0 274.0 750.0 269.5Q749.0 265.0 746.5 252.5z" fill="#e08c9c" stroke="#fff" stroke-width="2.4" stroke-linejoin="round"/>
<g clip-path="url(#mapclip)"><g filter="url(#soft)">
<polygon points="740.0,230.0 784.0,232.0 788.0,248.0 796.0,259.0 800.0,269.0 788.0,279.0 783.0,288.0 766.0,285.0 764.0,278.0 758.0,282.0 740.0,280.0" fill="#d688c4" stroke="#b89a8a" stroke-width="0.6"/>
<polygon points="784.0,232.0 785.0,205.0 819.0,205.0 819.0,223.0 815.0,241.0 817.0,255.0 808.0,269.0 800.0,269.0 796.0,259.0 788.0,248.0" fill="#f0b8a0" stroke="#b89a8a" stroke-width="0.6"/>
<polygon points="819.0,205.0 860.0,205.0 880.0,250.0 876.0,255.0 868.0,263.0 866.0,271.0 855.0,269.0 858.0,261.0 852.0,253.0 840.0,253.0 838.0,258.0 817.0,255.0 815.0,241.0 819.0,223.0" fill="#e0cf8e" stroke="#b89a8a" stroke-width="0.6"/>
<polygon points="840.0,253.0 852.0,253.0 858.0,261.0 855.0,269.0 866.0,271.0 868.0,263.0 876.0,255.0 890.0,250.0 925.0,300.0 916.0,305.0 880.0,309.0 868.0,311.0 860.0,321.0 852.0,321.0 849.0,307.0 848.0,295.0 840.0,285.0 833.0,279.0 836.0,263.0" fill="#d987c6" stroke="#b89a8a" stroke-width="0.6"/>
<polygon points="800.0,269.0 808.0,269.0 817.0,255.0 838.0,258.0 836.0,263.0 833.0,279.0 840.0,285.0 848.0,295.0 849.0,307.0 848.0,313.0 826.0,314.0 788.0,314.0 776.0,311.0 762.0,317.0 750.0,300.0 750.0,285.0 758.0,282.0 764.0,278.0 766.0,285.0 783.0,288.0 788.0,279.0" fill="#cbb878" stroke="#b89a8a" stroke-width="0.6"/>
<polygon points="750.0,317.0 762.0,317.0 776.0,311.0 788.0,314.0 826.0,314.0 848.0,313.0 853.0,321.0 852.0,333.0 843.0,345.0 838.0,365.0 800.0,356.0 776.0,357.0 750.0,352.0" fill="#e6dca0" stroke="#b89a8a" stroke-width="0.6"/>
<polygon points="860.0,321.0 868.0,311.0 880.0,309.0 916.0,305.0 945.0,315.0 945.0,345.0 926.0,351.0 912.0,357.0 900.0,364.0 888.0,361.0 876.0,351.0 864.0,349.0 853.0,333.0 853.0,321.0" fill="#df8e90" stroke="#b89a8a" stroke-width="0.6"/>
<polygon points="852.0,333.0 864.0,349.0 876.0,351.0 888.0,361.0 890.0,375.0 884.0,385.0 888.0,395.0 880.0,401.0 864.0,397.0 852.0,391.0 844.0,379.0 838.0,365.0 843.0,345.0" fill="#eeb09a" stroke="#b89a8a" stroke-width="0.6"/>
<polygon points="890.0,375.0 888.0,361.0 900.0,364.0 906.0,369.0 910.0,385.0 912.0,397.0 900.0,403.0 888.0,395.0 884.0,385.0" fill="#e27fd6" stroke="#b89a8a" stroke-width="0.6"/>
<polygon points="900.0,364.0 912.0,357.0 926.0,351.0 938.0,357.0 946.0,365.0 962.0,369.0 974.0,375.0 970.0,385.0 958.0,395.0 962.0,405.0 968.0,413.0 950.0,411.0 930.0,411.0 922.0,405.0 912.0,399.0 910.0,385.0 906.0,369.0" fill="#c9e48f" stroke="#b89a8a" stroke-width="0.6"/>
<polygon points="974.0,375.0 986.0,381.0 990.0,371.0 994.0,360.0 1030.0,360.0 1030.0,395.0 1022.0,405.0 1020.0,415.0 1008.0,421.0 1007.0,433.0 990.0,439.0 980.0,441.0 970.0,433.0 968.0,413.0 962.0,405.0 958.0,395.0 970.0,385.0" fill="#cfd58a" stroke="#b89a8a" stroke-width="0.6"/>
<polygon points="852.0,391.0 858.0,391.0 864.0,397.0 880.0,401.0 888.0,395.0 900.0,403.0 912.0,397.0 914.0,411.0 910.0,425.0 906.0,439.0 898.0,449.0 884.0,449.0 876.0,441.0 870.0,425.0 868.0,413.0 858.0,403.0" fill="#e896d2" stroke="#b89a8a" stroke-width="0.6"/>
<polygon points="912.0,399.0 922.0,405.0 930.0,411.0 950.0,411.0 968.0,413.0 970.0,433.0 958.0,439.0 950.0,445.0 938.0,457.0 922.0,453.0 914.0,461.0 898.0,457.0 898.0,449.0 906.0,439.0 910.0,425.0 914.0,411.0" fill="#d2da92" stroke="#b89a8a" stroke-width="0.6"/>
<polygon points="776.0,353.0 800.0,356.0 838.0,365.0 824.0,377.0 808.0,381.0 790.0,389.0 788.0,403.0 792.0,411.0 773.0,415.0 760.0,405.0 760.0,377.0" fill="#ecc8a0" stroke="#b89a8a" stroke-width="0.6"/>
<polygon points="824.0,377.0 838.0,365.0 844.0,379.0 852.0,391.0 858.0,403.0 868.0,413.0 852.0,417.0 834.0,425.0 816.0,419.0 806.0,421.0 792.0,411.0 788.0,403.0 790.0,389.0 808.0,381.0" fill="#c9a77c" stroke="#b89a8a" stroke-width="0.6"/>
<polygon points="773.0,415.0 792.0,411.0 806.0,421.0 816.0,419.0 834.0,425.0 834.0,441.0 840.0,457.0 838.0,473.0 822.0,480.0 834.0,496.0 848.0,506.0 844.0,520.0 834.0,530.0 826.0,532.0 760.0,500.0 765.0,431.0" fill="#e6c89a" stroke="#b89a8a" stroke-width="0.6"/>
<polygon points="834.0,425.0 852.0,417.0 868.0,413.0 870.0,425.0 876.0,441.0 872.0,453.0 860.0,465.0 854.0,473.0 856.0,476.0 855.0,496.0 848.0,506.0 834.0,496.0 822.0,480.0 838.0,473.0 840.0,457.0 834.0,441.0" fill="#e0a080" stroke="#b89a8a" stroke-width="0.6"/>
<polygon points="872.0,453.0 876.0,441.0 884.0,449.0 898.0,449.0 896.0,465.0 898.0,477.0 888.0,496.0 886.0,510.0 870.0,532.0 864.0,546.0 852.0,556.0 846.0,544.0 834.0,537.0 834.0,530.0 844.0,520.0 848.0,506.0 855.0,496.0 856.0,476.0 854.0,473.0 860.0,465.0" fill="#e2967e" stroke="#b89a8a" stroke-width="0.6"/>
<polygon points="898.0,449.0 898.0,457.0 914.0,461.0 922.0,453.0 938.0,457.0 944.0,470.0 946.0,482.0 940.0,490.0 934.0,496.0 918.0,498.0 914.0,504.0 898.0,506.0 888.0,496.0 898.0,477.0 896.0,465.0" fill="#e07a9a" stroke="#b89a8a" stroke-width="0.6"/>
<polygon points="938.0,457.0 950.0,445.0 958.0,439.0 970.0,433.0 980.0,441.0 990.0,439.0 984.0,425.0 990.0,418.0 1000.0,414.0 1015.0,418.0 1015.0,482.0 1002.0,492.0 990.0,488.0 976.0,478.0 958.0,470.0 944.0,470.0" fill="#ea8a90" stroke="#b89a8a" stroke-width="0.6"/>
<polygon points="940.0,490.0 946.0,482.0 944.0,470.0 958.0,470.0 976.0,478.0 990.0,488.0 1002.0,492.0 1015.0,482.0 1030.0,496.0 1022.0,496.0 1006.0,500.0 990.0,506.0 984.0,516.0 990.0,524.0 984.0,522.0 976.0,516.0 958.0,514.0 938.0,498.0 934.0,496.0" fill="#e08898" stroke="#b89a8a" stroke-width="0.6"/>
<polygon points="1022.0,496.0 1030.0,496.0 1055.0,510.0 1050.0,530.0 1030.0,550.0 1010.0,546.0 994.0,536.0 990.0,524.0 984.0,516.0 990.0,506.0 1006.0,500.0" fill="#e68ac0" stroke="#b89a8a" stroke-width="0.6"/>
<polygon points="918.0,498.0 934.0,496.0 938.0,498.0 958.0,514.0 958.0,520.0 946.0,528.0 934.0,536.0 930.0,548.0 922.0,544.0 916.0,530.0 914.0,504.0" fill="#eeaab0" stroke="#b89a8a" stroke-width="0.6"/>
<polygon points="958.0,520.0 958.0,514.0 976.0,516.0 984.0,522.0 990.0,524.0 994.0,536.0 1010.0,546.0 1008.0,554.0 990.0,552.0 970.0,558.0 962.0,558.0 954.0,568.0 938.0,562.0 930.0,558.0 930.0,548.0 934.0,536.0 946.0,528.0" fill="#eaa078" stroke="#b89a8a" stroke-width="0.6"/>
<polygon points="962.0,558.0 970.0,558.0 990.0,552.0 1008.0,554.0 1025.0,560.0 1025.0,610.0 940.0,615.0 942.0,600.0 948.0,586.0 958.0,572.0 954.0,568.0" fill="#eea0b0" stroke="#b89a8a" stroke-width="0.6"/>
<polygon points="864.0,546.0 870.0,532.0 886.0,510.0 904.0,520.0 904.0,534.0 906.0,546.0 904.0,558.0 892.0,566.0 884.0,574.0 880.0,570.0 874.0,556.0 864.0,550.0" fill="#d8cc90" stroke="#b89a8a" stroke-width="0.6"/>
<polygon points="820.0,561.0 852.0,556.0 864.0,546.0 864.0,550.0 874.0,556.0 880.0,570.0 884.0,574.0 880.0,582.0 864.0,586.0 862.0,596.0 864.0,612.0 840.0,608.0 825.0,580.0" fill="#e07e90" stroke="#b89a8a" stroke-width="0.6"/>
<polygon points="864.0,586.0 880.0,582.0 894.0,586.0 898.0,596.0 894.0,612.0 896.0,624.0 884.0,630.0 885.0,665.0 860.0,665.0 862.0,622.0 860.0,608.0 862.0,596.0" fill="#e8a0d8" stroke="#b89a8a" stroke-width="0.6"/>
<polygon points="884.0,574.0 892.0,566.0 904.0,558.0 906.0,546.0 904.0,534.0 904.0,520.0 914.0,504.0 916.0,530.0 922.0,544.0 930.0,548.0 930.0,558.0 938.0,562.0 936.0,564.0 924.0,576.0 920.0,596.0 928.0,616.0 926.0,632.0 905.0,632.0 896.0,624.0 894.0,612.0 898.0,596.0 894.0,586.0 880.0,582.0" fill="#de84c0" stroke="#b89a8a" stroke-width="0.6"/>
<polygon points="936.0,564.0 938.0,562.0 954.0,568.0 958.0,572.0 948.0,586.0 942.0,600.0 940.0,615.0 928.0,616.0 920.0,596.0 924.0,576.0" fill="#d878d8" stroke="#b89a8a" stroke-width="0.6"/>
</g></g>
<g font-size="6.8" fill="#2e2224" stroke="#2e2224" stroke-width="0.18" text-anchor="middle">
<text x="798.0" y="231.2">Северно</text>
<text x="798.0" y="238.8">бачки</text>
<text x="798.0" y="246.4">округ</text>
<text x="836.0" y="231.2">Северно</text>
<text x="836.0" y="238.8">банатски</text>
<text x="836.0" y="246.4">округ</text>
<text x="768.0" y="248.7">Западно</text>
<text x="768.0" y="256.3">бачки</text>
<text x="768.0" y="263.9">округ</text>
<text x="813.0" y="281.2">Јужно</text>
<text x="813.0" y="288.8">бачки</text>
<text x="813.0" y="296.4">округ</text>
<text x="862.0" y="279.2">Средње</text>
<text x="862.0" y="286.8">банатски</text>
<text x="862.0" y="294.4">округ</text>
<text x="808.0" y="328.6">Сремски</text>
<text x="899.0" y="337.6">округ</text>
<text x="797.0" y="367.2">Мачвански</text>
<text x="797.0" y="374.8">округ</text>
<text x="857.0" y="361.2">Град</text>
<text x="818.0" y="401.6">Колубарски</text>
<text x="818.0" y="409.2">округ</text>
<text x="898.0" y="388.2">округ</text>
<text x="889.0" y="423.0">Шумадијски</text>
<text x="889.0" y="430.6">округ</text>
<text x="930.0" y="430.8">Поморавски</text>
<text x="930.0" y="438.4">округ</text>
<text x="990.0" y="399.6">Борски</text>
<text x="990.0" y="407.2">округ</text>
<text x="853.0" y="446.2">Моравички</text>
<text x="853.0" y="453.8">округ</text>
<text x="813.0" y="463.2">Златиборски</text>
<text x="813.0" y="470.8">округ</text>
<text x="981.0" y="465.8">Зајечарски</text>
<text x="981.0" y="473.4">округ</text>
<text x="870.0" y="482.6">Рашки</text>
<text x="870.0" y="490.2">округ</text>
<text x="916.0" y="483.2">Расински</text>
<text x="916.0" y="490.8">округ</text>
<text x="964.0" y="498.2">Нишавски</text>
<text x="930.0" y="523.8">Топлички</text>
<text x="930.0" y="531.4">округ</text>
<text x="1015.0" y="521.0">Пиротски</text>
<text x="1015.0" y="528.6">округ</text>
<text x="967.0" y="542.6">Јабланички</text>
<text x="967.0" y="550.2">округ</text>
<text x="887.0" y="537.2">Косовско</text>
<text x="887.0" y="544.8">митровачки</text>
<text x="887.0" y="552.4">округ</text>
<text x="854.0" y="576.2">Пећки</text>
<text x="854.0" y="583.8">округ</text>
<text x="906.0" y="573.2">Косовски</text>
<text x="906.0" y="580.8">округ</text>
<text x="945.0" y="580.2">Косовско</text>
<text x="945.0" y="587.8">поморавски</text>
<text x="945.0" y="595.4">округ</text>
<text x="987.0" y="575.0">Пчињски</text>
<text x="987.0" y="582.6">округ</text>
<text x="882.0" y="614.2">Призренски</text>
<text x="882.0" y="621.8">округ</text>
</g>
<g font-weight="bold" font-size="9.8" fill="#1878a6" stroke="#1878a6" stroke-width="0.25" text-anchor="middle">
<rect x="773.0" y="210.6" width="60.0" height="11.4" fill="#fbf305" stroke="#78b4e0" stroke-width="1" />
<text x="803.0" y="219.2" textLength="46.0" lengthAdjust="spacingAndGlyphs">СУБОТИЦА</text>
<rect x="733.5" y="225.0" width="50.0" height="12.0" fill="#fbf305" stroke="#78b4e0" stroke-width="1" />
<text x="758.5" y="233.8" textLength="36.7" lengthAdjust="spacingAndGlyphs">СОМБОР</text>
<rect x="857.0" y="235.0" width="50.0" height="12.0" fill="#fbf305" stroke="#78b4e0" stroke-width="1" />
<text x="882.0" y="243.8" textLength="39.5" lengthAdjust="spacingAndGlyphs">КИКИНДА</text>
<rect x="787.6" y="294.6" width="55.4" height="12.0" fill="#fbf305" stroke="#78b4e0" stroke-width="1" />
<text x="815.3" y="303.5" textLength="44.2" lengthAdjust="spacingAndGlyphs">НОВИ САД</text>
<rect x="847.6" y="294.6" width="64.0" height="12.0" fill="#fbf305" stroke="#78b4e0" stroke-width="1" />
<text x="879.6" y="303.5" textLength="48.4" lengthAdjust="spacingAndGlyphs">ЗРЕЊАНИН</text>
<rect x="883.6" y="316.0" width="50.4" height="11.4" fill="#fbf305" stroke="#78b4e0" stroke-width="1" />
<text x="908.8" y="324.6" textLength="41.1" lengthAdjust="spacingAndGlyphs">ПАНЧЕВО</text>
<rect x="773.0" y="330.0" width="70.0" height="23.0" fill="#fbf305" stroke="#78b4e0" stroke-width="1" />
<text x="808.0" y="338.6" textLength="40.5" lengthAdjust="spacingAndGlyphs">СРЕМСКА</text>
<text x="808.0" y="350.1" textLength="53.2" lengthAdjust="spacingAndGlyphs">МИТРОВИЦА</text>
<rect x="828.0" y="364.0" width="59.0" height="12.0" fill="#fbf305" stroke="#78b4e0" stroke-width="1" />
<text x="857.5" y="372.9" textLength="39.2" lengthAdjust="spacingAndGlyphs">БЕОГРАД</text>
<rect x="882.4" y="368.6" width="73.6" height="12.0" fill="#fbf305" stroke="#78b4e0" stroke-width="1" />
<text x="919.2" y="377.5" textLength="52.5" lengthAdjust="spacingAndGlyphs">СМЕДЕРЕВО</text>
<rect x="763.6" y="376.6" width="43.4" height="11.4" fill="#fbf305" stroke="#78b4e0" stroke-width="1" />
<text x="785.3" y="385.2" textLength="31.7" lengthAdjust="spacingAndGlyphs">ШАБАЦ</text>
<rect x="907.0" y="381.6" width="74.0" height="11.4" fill="#fbf305" stroke="#78b4e0" stroke-width="1" />
<text x="944.0" y="390.2" textLength="53.9" lengthAdjust="spacingAndGlyphs">ПОЖАРЕВАЦ</text>
<rect x="808.0" y="384.0" width="49.0" height="11.6" fill="#fbf305" stroke="#78b4e0" stroke-width="1" />
<text x="832.5" y="392.7" textLength="38.0" lengthAdjust="spacingAndGlyphs">ВАЉЕВО</text>
<rect x="847.4" y="403.6" width="68.6" height="11.8" fill="#fbf305" stroke="#78b4e0" stroke-width="1" />
<text x="881.7" y="412.4" textLength="52.9" lengthAdjust="spacingAndGlyphs">КРАГУЈЕВАЦ</text>
<rect x="911.6" y="413.4" width="54.4" height="11.6" fill="#fbf305" stroke="#78b4e0" stroke-width="1" />
<text x="938.8" y="422.1" textLength="44.9" lengthAdjust="spacingAndGlyphs">ЈАГОДИНА</text>
<rect x="967.0" y="424.3" width="39.4" height="12.2" fill="#fbf305" stroke="#78b4e0" stroke-width="1" />
<text x="986.7" y="433.2" textLength="17.7" lengthAdjust="spacingAndGlyphs">БОР</text>
<rect x="837.4" y="428.4" width="34.6" height="11.2" fill="#fbf305" stroke="#78b4e0" stroke-width="1" />
<text x="854.7" y="436.9" textLength="27.7" lengthAdjust="spacingAndGlyphs">ЧАЧАК</text>
<rect x="783.6" y="443.0" width="44.0" height="12.0" fill="#fbf305" stroke="#78b4e0" stroke-width="1" />
<text x="805.6" y="451.9" textLength="29.9" lengthAdjust="spacingAndGlyphs">УЖИЦЕ</text>
<rect x="954.0" y="443.5" width="47.6" height="12.5" fill="#fbf305" stroke="#78b4e0" stroke-width="1" />
<text x="977.8" y="452.6" textLength="38.2" lengthAdjust="spacingAndGlyphs">ЗАЈЕЧАР</text>
<rect x="842.6" y="458.0" width="53.4" height="12.0" fill="#fbf305" stroke="#78b4e0" stroke-width="1" />
<text x="869.3" y="466.9" textLength="42.2" lengthAdjust="spacingAndGlyphs">КРАЉЕВО</text>
<rect x="892.0" y="465.6" width="64.0" height="11.8" fill="#fbf305" stroke="#78b4e0" stroke-width="1" />
<text x="924.0" y="474.4" textLength="46.6" lengthAdjust="spacingAndGlyphs">КРУШЕВАЦ</text>
<rect x="951.5" y="477.5" width="39.1" height="12.0" fill="#fbf305" stroke="#78b4e0" stroke-width="1" />
<text x="971.0" y="486.4" textLength="20.1" lengthAdjust="spacingAndGlyphs">НИШ</text>
<rect x="996.6" y="499.0" width="44.4" height="12.4" fill="#fbf305" stroke="#78b4e0" stroke-width="1" />
<text x="1018.8" y="508.1" textLength="28.5" lengthAdjust="spacingAndGlyphs">ПИРОТ</text>
<rect x="916.4" y="502.0" width="59.6" height="11.6" fill="#fbf305" stroke="#78b4e0" stroke-width="1" />
<text x="946.2" y="510.7" textLength="48.3" lengthAdjust="spacingAndGlyphs">ПРОКУПЉЕ</text>
<rect x="852.0" y="507.0" width="64.0" height="24.0" fill="#fbf305" stroke="#78b4e0" stroke-width="1" />
<text x="884.0" y="515.9" textLength="45.9" lengthAdjust="spacingAndGlyphs">КОСОВСКА</text>
<text x="884.0" y="527.9" textLength="53.2" lengthAdjust="spacingAndGlyphs">МИТРОВИЦА</text>
<rect x="946.3" y="527.2" width="59.4" height="12.0" fill="#fbf305" stroke="#78b4e0" stroke-width="1" />
<text x="976.0" y="536.1" textLength="46.0" lengthAdjust="spacingAndGlyphs">ЛЕСКОВАЦ</text>
<rect x="965.6" y="556.3" width="44.1" height="12.3" fill="#fbf305" stroke="#78b4e0" stroke-width="1" />
<text x="987.7" y="565.3" textLength="30.8" lengthAdjust="spacingAndGlyphs">ВРАЊЕ</text>
</g>
<polygon points="810.5,225.9 817.3,235.0 803.7,235.0" fill="#cf1a0a" stroke="#f2a63a" stroke-width="0.8"/>
<polygon points="751.5,240.7 758.3,250.6 744.7,250.6" fill="#cf1a0a" stroke="#f2a63a" stroke-width="0.8"/>
<polygon points="865.1,245.9 871.9,255.0 858.3,255.0" fill="#cf1a0a" stroke="#f2a63a" stroke-width="0.8"/>
<polygon points="870.5,280.3 877.3,290.0 863.7,290.0" fill="#cf1a0a" stroke="#f2a63a" stroke-width="0.8"/>
<polygon points="944.0,394.3 950.7,403.6 937.3,403.6" fill="#cf1a0a" stroke="#f2a63a" stroke-width="0.8"/>
<polygon points="983.5,409.3 990.3,418.6 976.7,418.6" fill="#cf1a0a" stroke="#f2a63a" stroke-width="0.8"/>
<polygon points="954.0,428.7 960.9,438.6 947.1,438.6" fill="#cf1a0a" stroke="#f2a63a" stroke-width="0.8"/>
<polygon points="855.5,443.3 862.3,453.0 848.7,453.0" fill="#cf1a0a" stroke="#f2a63a" stroke-width="0.8"/>
<polygon points="993.5,458.3 1000.3,468.0 986.7,468.0" fill="#cf1a0a" stroke="#f2a63a" stroke-width="0.8"/>
<polygon points="934.7,517.9 941.3,527.6 928.1,527.6" fill="#cf1a0a" stroke="#f2a63a" stroke-width="0.8"/>
<polygon points="899.5,533.3 906.3,542.6 892.7,542.6" fill="#cf1a0a" stroke="#f2a63a" stroke-width="0.8"/>
<polygon points="954.0,542.3 960.9,552.4 947.1,552.4" fill="#cf1a0a" stroke="#f2a63a" stroke-width="0.8"/>
<polygon points="1033.5,516.8 1040.3,527.0 1026.7,527.0" fill="#cf1a0a" stroke="#f2a63a" stroke-width="0.8"/>
<polygon points="978.8,582.3 985.9,592.0 971.7,592.0" fill="#cf1a0a" stroke="#f2a63a" stroke-width="0.8"/>
<polygon points="800.6,280.8 807.4,287.6 800.6,294.4 793.8,287.6" fill="#13245c" stroke="#e8c860" stroke-width="0.7"/>
<polygon points="884.8,330.2 891.6,337.0 884.8,343.8 878.0,337.0" fill="#13245c" stroke="#e8c860" stroke-width="0.7"/>
<polygon points="835.5,334.7 842.3,341.5 835.5,348.3 828.7,341.5" fill="#13245c" stroke="#e8c860" stroke-width="0.7"/>
<polygon points="855.6,350.2 862.4,357.0 855.6,363.8 848.8,357.0" fill="#13245c" stroke="#e8c860" stroke-width="0.7"/>
<polygon points="939.4,364.2 946.2,371.0 939.4,377.8 932.6,371.0" fill="#13245c" stroke="#e8c860" stroke-width="0.7"/>
<polygon points="811.0,374.2 817.8,381.0 811.0,387.8 804.2,381.0" fill="#13245c" stroke="#e8c860" stroke-width="0.7"/>
<polygon points="845.0,394.2 851.8,401.0 845.0,407.8 838.2,401.0" fill="#13245c" stroke="#e8c860" stroke-width="0.7"/>
<polygon points="899.6,394.2 906.4,401.0 899.6,407.8 892.8,401.0" fill="#13245c" stroke="#e8c860" stroke-width="0.7"/>
<polygon points="805.6,473.2 812.4,480.0 805.6,486.8 798.8,480.0" fill="#13245c" stroke="#e8c860" stroke-width="0.7"/>
<polygon points="884.6,473.2 891.4,480.0 884.6,486.8 877.8,480.0" fill="#13245c" stroke="#e8c860" stroke-width="0.7"/>
<polygon points="934.0,477.6 940.8,484.4 934.0,491.2 927.2,484.4" fill="#13245c" stroke="#e8c860" stroke-width="0.7"/>
<polygon points="979.0,492.8 985.8,499.6 979.0,506.4 972.2,499.6" fill="#13245c" stroke="#e8c860" stroke-width="0.7"/>
</g>
<g id="footer" fill="#d6deee">
<text x="698.0" y="609.1" font-size="4.6" fill="#e8ecf6" font-weight="bold" text-anchor="end" >РЕПУБЛИКА СРБИЈА</text>
<text x="698.0" y="621.2" font-size="7.3" fill="#d0d8ea" textLength="66.0" lengthAdjust="spacingAndGlyphs" text-anchor="end" >Министарство за рад,</text>
<text x="698.0" y="629.7" font-size="7.3" fill="#d0d8ea" textLength="72.5" lengthAdjust="spacingAndGlyphs" text-anchor="end" >запошљавање, борачка</text>
<text x="698.0" y="638.2" font-size="7.3" fill="#d0d8ea" textLength="61.0" lengthAdjust="spacingAndGlyphs" text-anchor="end" >и социјална питања</text>
<text x="756.7" y="609.1" font-size="4.6" fill="#e8ecf6" textLength="39.5" lengthAdjust="spacingAndGlyphs" font-weight="bold" >REPUBLIC OF SERBIA</text>
<text x="756.7" y="621.2" font-size="7.3" fill="#d0d8ea" textLength="56.0" lengthAdjust="spacingAndGlyphs" >Ministry of Labour,</text>
<text x="756.7" y="629.7" font-size="7.3" fill="#d0d8ea" textLength="66.0" lengthAdjust="spacingAndGlyphs" >Employment, Veterans</text>
<text x="756.7" y="638.2" font-size="7.3" fill="#d0d8ea" textLength="49.5" lengthAdjust="spacingAndGlyphs" >and Social Affairs</text>
<g transform="translate(727.5 596.7) scale(1.000)"><g fill="none" stroke="#b08f2e" stroke-width="1.500"><path d="M-8.500 12.500q-5-7 1.500-8.500q4-.5 7 2q3-2.500 7-2q6.500 1.500 1.500 8.500"/><path d="M0 5.500v7M-4.500 12q-2-4 4.500-6.500q6.500 2.500 4.500 6.500"/></g><path d="M-8.500 11.500h17l-1 4h-15z" fill="#a8872a"/><path d="M-0.700 0h1.400v1.600h1.500v1.300h-1.500v2.600h-1.400v-2.600h-1.500v-1.300h1.500z" fill="#c8a63c"/><path d="M-12.500 15.500h25v17.500q0 10.500-12.500 15q-12.500-4.500-12.500-15z" fill="#d63a32"/><path d="M-2.500 19l-2.500-1.500l-6.500 1v17l5 5l2.500-4l-.5-9zM2.500 19l2.500-1.500l6.500 1v17l-5 5l-2.500-4l.5-9z" fill="#efefef"/><path d="M-2.500 18.500q1-2.500 2.500 0q1.500-2.500 2.500 0l-1 6h-3zM-3.500 37h7l1.500 9h-10z" fill="#f2f2f2"/><path d="M-11 20.500h7M-11 24h6.500M-11 27.500h6M-11 31h6.500M4 20.500h7M4.500 24h6.500M5 27.500h6M4.500 31h6.500" stroke="#c9c9c9" stroke-width="0.700"/><path d="M-4.300 23h8.600v8q0 4-4.300 6q-4.300-2-4.300-6z" fill="#c92f2c"/><path d="M-0.700 24h1.400v4h3v1.400h-3v6h-1.400v-6h-3v-1.400h3z" fill="#fff"/><path d="M-9 38.500l3 1.500l-1 3.500l-3-1.500zM9 38.500l-3 1.500l1 3.500l3-1.500z" fill="#c9a030"/></g>
</g>
</g>
<rect x="1051.500" y="632.500" width="1.600" height="2.600" fill="#e8e8f0"/>
<path d="M771 477l0 8l2-2l1.5 3.5l1.2-.5l-1.5-3.5l3 0z" fill="#fff" stroke="#444" stroke-width="0.5"/>
<g id="status-items">
<text x="69.8" y="703.9" font-size="8.4" fill="#606060" textLength="43.5" lengthAdjust="spacingAndGlyphs" >Slide 3 of 39</text>
<rect x="126" y="696.500" width="6.500" height="7.500" fill="none" stroke="#7a7a7a" stroke-width="0.800"/><path d="M130 703.500l5-5.500" stroke="#7a7a7a" stroke-width="1"/>
<text x="146.7" y="703.9" font-size="8.4" fill="#606060" textLength="76.8" lengthAdjust="spacingAndGlyphs" >English (United States)</text>
<path d="M867 703.500h7l-1-3.500h-5zM869 700l1.500-3l1.500 3" fill="none" stroke="#7a7a7a" stroke-width="0.800"/>
<text x="879.7" y="703.9" font-size="8.4" fill="#606060" textLength="20.0" lengthAdjust="spacingAndGlyphs" >Notes</text>
<path d="M914 696.500h10v6h-5l-2.500 2.500v-2.500h-2.500z" fill="#6e6e6e"/>
<text x="925.3" y="703.9" font-size="8.4" fill="#606060" textLength="35.5" lengthAdjust="spacingAndGlyphs" >Comments</text>
<rect x="975.0" y="694.5" width="24.0" height="11.5" fill="#cfcfcf" />
<rect x="983" y="696.500" width="8" height="7.500" fill="none" stroke="#7a7a7a" stroke-width="0.800"/><rect x="985" y="698.500" width="2" height="2" fill="#6e6e6e"/>
<path d="M1007.500 697h3v2.500h-3zM1013 697h3v2.500h-3zM1007.500 701.500h3v2.500h-3zM1013 701.500h3v2.500h-3z" fill="none" stroke="#8e8e8e" stroke-width="0.800"/>
<path d="M1030.500 697h4v7h-4zM1034.500 697h4v7h-4" fill="none" stroke="#8e8e8e" stroke-width="0.800"/>
<path d="M1055.500 696.500h9M1056.500 696.500v4.500h7v-4.500M1060 701v2M1058 704.500l2-1.500l2 1.500" fill="none" stroke="#8e8e8e" stroke-width="0.800"/>
<path d="M1076 700.800h4.500" stroke="#555" stroke-width="1.100"/>
<path d="M1084 700.800h74.500" stroke="#b8b8b8" stroke-width="1"/><path d="M1121 699v3.500" stroke="#b8b8b8" stroke-width="0.800"/>
<rect x="1112.8" y="696.5" width="3.2" height="9.0" fill="#555" />
<path d="M1161 700.800h6.500M1164.300 697.500v6.500" stroke="#555" stroke-width="1.100"/>
<text x="1177.0" y="703.9" font-size="8.4" fill="#606060" textLength="14.0" lengthAdjust="spacingAndGlyphs" >83%</text>
<rect x="1201.500" y="696" width="9" height="9" fill="none" stroke="#8e8e8e" stroke-width="0.800"/><path d="M1203.500 700.500h5M1206 698v5" stroke="#8e8e8e" stroke-width="0.800"/>
<text x="259.0" y="682.3" font-size="10.8" fill="#555" textLength="87.5" lengthAdjust="spacingAndGlyphs" >Click to add notes</text>
<rect x="1203.0" y="202.0" width="9.0" height="459.0" fill="#d9d9db" />
<rect x="1203.5" y="204.5" width="8.5" height="10.0" fill="#fff" />
<path d="M1205.500 211l2.200-2.500l2.200 2.500z" fill="#555"/>
<rect x="1203.5" y="242.0" width="8.5" height="12.0" fill="#fff" />
<path d="M1205.500 618.500l2.200 2.500l2.200-2.500z" fill="#555"/>
<path d="M1205.500 631.500l2.200-2l2.200 2M1205.500 634.500l2.200-2l2.200 2M1205.500 642.500l2.200 2l2.200-2M1205.500 645.500l2.200 2l2.200-2" fill="none" stroke="#555" stroke-width="0.900"/>
</g>
</svg>
<div id="banner"><svg width="250" height="20" viewBox="466 92 250 20" style="position:absolute;left:0;top:0"><text x="485.0" y="105.8" font-size="10.6" fill="#0d3b1f" textLength="196.0" lengthAdjust="spacingAndGlyphs" font-weight="bold" >You are viewing  Pilot Ucionica's screen</text><path d="M688.500 98.500q2.200-2 3 0v3q-.8 2-3 0z" fill="#0d3b1f"/><path d="M687 103q3 3.500 6 0M690 105v2" stroke="#0d3b1f" fill="none" stroke-width="0.900"/><path d="M686.500 107.500l8-10.500" stroke="#0d3b1f" stroke-width="1.100"/></svg></div><div id="viewopt"><svg width="98" height="20" viewBox="716 92 98 20" style="position:absolute;left:0;top:0"><text x="725.0" y="105.8" font-size="10.6" fill="#fff" textLength="66.5" lengthAdjust="spacingAndGlyphs" font-weight="bold" >View Options</text><path d="M796.500 100.500l4 3.500l4-3.500" fill="none" stroke="#fff" stroke-width="1.500"/></svg></div>
</body></html>
